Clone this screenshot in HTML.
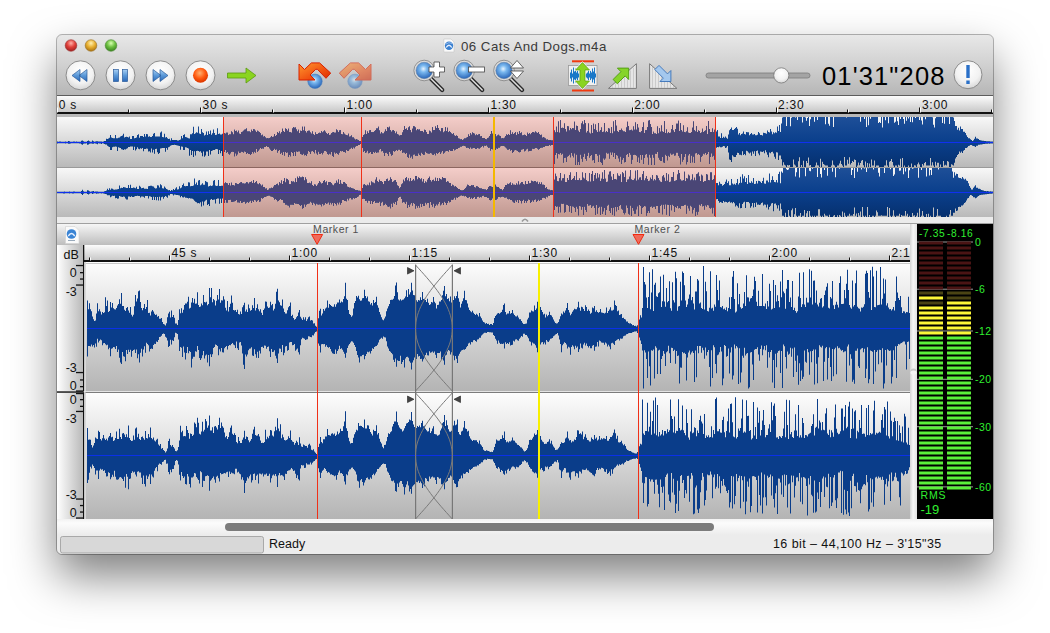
<!DOCTYPE html><html><head><meta charset="utf-8"><style>*{margin:0;padding:0}html,body{width:1050px;height:633px;background:#fff;overflow:hidden}#sh{position:absolute;left:57px;top:35px;width:936px;height:519px;border-radius:5px;box-shadow:0 22px 45px rgba(0,0,0,.5)}svg{position:absolute;left:0;top:0}</style></head><body>
<div id="sh"></div>
<svg width="1050" height="633" viewBox="0 0 1050 633" font-family="Liberation Sans, sans-serif">
<clipPath id="wclip"><rect x="57" y="35" width="936" height="519" rx="5"/></clipPath>
<g clip-path="url(#wclip)">
<rect x="57" y="35" width="936" height="519" fill="#e4e4e4"/>
<defs>
<linearGradient id="gTb" x1="0" y1="0" x2="0" y2="1"><stop offset="0" stop-color="#e8e8e8"/><stop offset="0.5" stop-color="#d0d0d0"/><stop offset="1" stop-color="#b5b5b5"/></linearGradient>
<linearGradient id="gRul" x1="0" y1="0" x2="0" y2="1"><stop offset="0" stop-color="#fcfcfc"/><stop offset="1" stop-color="#c8c8c8"/></linearGradient>
<linearGradient id="gMk" x1="0" y1="0" x2="0" y2="1"><stop offset="0" stop-color="#f6f6f6"/><stop offset="1" stop-color="#bdbdbd"/></linearGradient>
<linearGradient id="gCh" x1="0" y1="0" x2="0" y2="1"><stop offset="0" stop-color="#fdfdfd"/><stop offset="1" stop-color="#b4b4b4"/></linearGradient>
<linearGradient id="gChO" x1="0" y1="0" x2="0" y2="1"><stop offset="0" stop-color="#f8f8f8"/><stop offset="1" stop-color="#b9b9b9"/></linearGradient>
<linearGradient id="gDb" x1="0" y1="0" x2="1" y2="0"><stop offset="0" stop-color="#ffffff"/><stop offset="1" stop-color="#b9b9b9"/></linearGradient>
<linearGradient id="gScr" x1="0" y1="0" x2="0" y2="1"><stop offset="0" stop-color="#f2f2f2"/><stop offset="0.25" stop-color="#fcfcfc"/><stop offset="1" stop-color="#ececec"/></linearGradient>
<radialGradient id="gBtn" cx="0.5" cy="0.35" r="0.7"><stop offset="0" stop-color="#ffffff"/><stop offset="0.6" stop-color="#f2f2f2"/><stop offset="1" stop-color="#d0d0d0"/></radialGradient>
<radialGradient id="gRed" cx="0.5" cy="0.3" r="0.7"><stop offset="0" stop-color="#ffb0a8"/><stop offset="0.5" stop-color="#e0403a"/><stop offset="1" stop-color="#a02020"/></radialGradient>
<radialGradient id="gYel" cx="0.5" cy="0.3" r="0.7"><stop offset="0" stop-color="#fff0b0"/><stop offset="0.5" stop-color="#e8b030"/><stop offset="1" stop-color="#a87010"/></radialGradient>
<radialGradient id="gGrn" cx="0.5" cy="0.3" r="0.7"><stop offset="0" stop-color="#d8ffb0"/><stop offset="0.5" stop-color="#6cc040"/><stop offset="1" stop-color="#3a8020"/></radialGradient>
<radialGradient id="gRec" cx="0.45" cy="0.35" r="0.6"><stop offset="0" stop-color="#ffb070"/><stop offset="0.6" stop-color="#ff5a10"/><stop offset="1" stop-color="#e03a00"/></radialGradient>
<radialGradient id="gLens" cx="0.45" cy="0.4" r="0.6"><stop offset="0" stop-color="#e8f4ff"/><stop offset="0.35" stop-color="#7ab8ef"/><stop offset="1" stop-color="#2a66b8"/></radialGradient>
<linearGradient id="gBlueIc" x1="0" y1="0" x2="0" y2="1"><stop offset="0" stop-color="#a8d0f4"/><stop offset="0.5" stop-color="#5a98d8"/><stop offset="1" stop-color="#2a68b8"/></linearGradient>
<linearGradient id="gPink" x1="0" y1="0" x2="0" y2="1"><stop offset="0" stop-color="#f4cdc9"/><stop offset="1" stop-color="#c09890"/></linearGradient>
<linearGradient id="gWo1" gradientUnits="userSpaceOnUse" x1="0" y1="117" x2="0" y2="167"><stop offset="0" stop-color="#1e4f98"/><stop offset="0.5" stop-color="#0a3f8c"/><stop offset="1" stop-color="#06306e"/></linearGradient>
<linearGradient id="gWo2" gradientUnits="userSpaceOnUse" x1="0" y1="168" x2="0" y2="217"><stop offset="0" stop-color="#1e4f98"/><stop offset="0.5" stop-color="#0a3f8c"/><stop offset="1" stop-color="#06306e"/></linearGradient>
<linearGradient id="gStrip" x1="0" y1="0" x2="1" y2="0"><stop offset="0" stop-color="#d4d4d4"/><stop offset="0.45" stop-color="#f6f6f6"/><stop offset="1" stop-color="#e2e2e2"/></linearGradient>
</defs>
<rect x="57" y="35" width="936" height="61" fill="url(#gTb)"/>
<rect x="57" y="95" width="936" height="1" fill="#5c5c5c"/>
<circle cx="71" cy="45.5" r="5.8" fill="url(#gRed)" stroke="#9a3030" stroke-width="0.6"/>
<circle cx="91" cy="45.5" r="5.8" fill="url(#gYel)" stroke="#9a7020" stroke-width="0.6"/>
<circle cx="111" cy="45.5" r="5.8" fill="url(#gGrn)" stroke="#4a8a30" stroke-width="0.6"/>
<text x="461" y="50.5" font-size="13.3" fill="#3a3a3a" letter-spacing="0.45">06 Cats And Dogs.m4a</text>
<path d="M443.8 39 H451 L454 42 V52 H443.8 Z" fill="#fafafa" stroke="#c8c8c8" stroke-width="0.6"/><circle cx="449" cy="45.8" r="4.2" fill="#3a80d0"/><path d="M446.2 47.5 Q449 43 451.8 47.5" fill="none" stroke="#e8f0ff" stroke-width="1.3"/><path d="M445.5 44.2 Q449 41.5 452.3 43.5" fill="none" stroke="#a8c8f0" stroke-width="0.8"/>
<circle cx="80.5" cy="75.3" r="14.5" fill="url(#gBtn)" stroke="#8c8c8c" stroke-width="1"/>
<circle cx="120.5" cy="75.3" r="14.5" fill="url(#gBtn)" stroke="#8c8c8c" stroke-width="1"/>
<circle cx="160.5" cy="75.3" r="14.5" fill="url(#gBtn)" stroke="#8c8c8c" stroke-width="1"/>
<circle cx="200.5" cy="75.3" r="14.5" fill="url(#gBtn)" stroke="#8c8c8c" stroke-width="1"/>
<path d="M72 75.5 L80 69.5 V81.5 Z M79 75.5 L87 69.5 V81.5 Z" fill="url(#gBlueIc)" stroke="#2a5a9a" stroke-width="0.7"/>
<rect x="113.5" y="69.5" width="5" height="12" fill="url(#gBlueIc)" stroke="#2a5a9a" stroke-width="0.7"/><rect x="122.5" y="69.5" width="5" height="12" fill="url(#gBlueIc)" stroke="#2a5a9a" stroke-width="0.7"/>
<path d="M153 69.5 L161 75.5 L153 81.5 Z M160 69.5 L168 75.5 L160 81.5 Z" fill="url(#gBlueIc)" stroke="#2a5a9a" stroke-width="0.7"/>
<circle cx="200.5" cy="75.3" r="7.5" fill="url(#gRec)"/>
<path d="M227.5 73 H246 V68 L256 75.5 L246 83 V78 H227.5 Z" fill="#8ad420" stroke="#5a9a10" stroke-width="0.8"/>
<linearGradient id="gUndo" x1="0" y1="0" x2="1" y2="1"><stop offset="0" stop-color="#ff9a30"/><stop offset="0.6" stop-color="#f05010"/><stop offset="1" stop-color="#d82800"/></linearGradient>
<circle cx="315" cy="81.3" r="7.2" fill="url(#gLens)" stroke="#4a80c0" stroke-width="0.6"/>
<path d="M299 64 L304.5 69.5 L311.4 62.9 L319.6 62.9 L330.7 73.1 L326 78.3 L317.4 69.3 L315.7 69.3 L310 75 L315 80 L299 80 Z" fill="url(#gUndo)" stroke="#d82000" stroke-width="1"/>
<g opacity="0.55"><circle cx="355" cy="81.3" r="7.2" fill="url(#gLens)" stroke="#4a80c0" stroke-width="0.6"/>
<path d="M371.0 64 L365.5 69.5 L358.6 62.9 L350.4 62.9 L339.3 73.1 L344.0 78.3 L352.6 69.3 L354.3 69.3 L360.0 75 L355.0 80 L371.0 80 Z" fill="url(#gUndo)" stroke="#d82000" stroke-width="1"/></g>
<line x1="430.2" y1="78" x2="442.2" y2="90" stroke="#2a2a2a" stroke-width="4.2" stroke-linecap="round"/>
<line x1="430.2" y1="78" x2="442.2" y2="90" stroke="#ddd" stroke-width="1.5" stroke-linecap="round"/>
<circle cx="424.2" cy="70.5" r="10.3" fill="#dcdcdc" stroke="#808080" stroke-width="0.8"/>
<circle cx="424.2" cy="70.5" r="8.2" fill="url(#gLens)" stroke="#5a7aa0" stroke-width="0.5"/>
<line x1="470.2" y1="78" x2="482.2" y2="90" stroke="#2a2a2a" stroke-width="4.2" stroke-linecap="round"/>
<line x1="470.2" y1="78" x2="482.2" y2="90" stroke="#ddd" stroke-width="1.5" stroke-linecap="round"/>
<circle cx="464.2" cy="70.5" r="10.3" fill="#dcdcdc" stroke="#808080" stroke-width="0.8"/>
<circle cx="464.2" cy="70.5" r="8.2" fill="url(#gLens)" stroke="#5a7aa0" stroke-width="0.5"/>
<line x1="510" y1="78" x2="522" y2="90" stroke="#2a2a2a" stroke-width="4.2" stroke-linecap="round"/>
<line x1="510" y1="78" x2="522" y2="90" stroke="#ddd" stroke-width="1.5" stroke-linecap="round"/>
<circle cx="504" cy="70.5" r="10.3" fill="#dcdcdc" stroke="#808080" stroke-width="0.8"/>
<circle cx="504" cy="70.5" r="8.2" fill="url(#gLens)" stroke="#5a7aa0" stroke-width="0.5"/>
<path d="M434 62 H439.5 V67 H444.5 V72 H439.5 V77 H434 V72 H429 V67 H434 Z" fill="#fff" stroke="#444" stroke-width="0.8"/>
<rect x="468.5" y="67" width="16" height="5" fill="#fff" stroke="#444" stroke-width="0.8"/>
<path d="M510.5 68 L517 60.5 L523.5 68 Z M510.5 71 L517 78.5 L523.5 71 Z" fill="#fff" stroke="#444" stroke-width="0.8"/>
<rect x="572" y="60.3" width="22" height="2" fill="#f03a10"/><rect x="572" y="89.5" width="22" height="2" fill="#f03a10"/>
<rect x="568.5" y="65.5" width="28.5" height="20" fill="#f0f0f0" stroke="#999" stroke-width="0.8"/>
<path d="M570.5 72.5 V78.5 M571.5 69.5 V81.5 M572.5 73.5 V77.5 M573.5 67.5 V83.5 M574.5 71.5 V79.5 M575.5 68.5 V82.5 M576.5 72.5 V78.5 M577.5 70.5 V80.5 M578.5 73.5 V77.5 M579.5 69.5 V81.5 M580.5 72.5 V78.5 M581.5 73.5 V77.5 M582.5 74.5 V76.5 M583.5 74.5 V76.5 M584.5 74.5 V76.5 M585.5 74.5 V76.5 M586.5 73.5 V77.5 M587.5 72.5 V78.5 M588.5 69.5 V81.5 M589.5 73.5 V77.5 M590.5 70.5 V80.5 M591.5 72.5 V78.5 M592.5 68.5 V82.5 M593.5 71.5 V79.5 M594.5 67.5 V83.5 M595.5 73.5 V77.5" stroke="#1a78c8" stroke-width="1" fill="none"/>
<path d="M582.5 62.5 L589.5 70 H585 V81 H589.5 L582.5 88.5 L575.5 81 H580 V70 H575.5 Z" fill="#8ad420" stroke="#fff" stroke-width="1.6"/>
<path d="M582.5 62.5 L589.5 70 H585 V81 H589.5 L582.5 88.5 L575.5 81 H580 V70 H575.5 Z" fill="#8ad420" stroke="#5a9a10" stroke-width="0.7"/>
<linearGradient id="gStr" x1="0" y1="0" x2="1" y2="0" spreadMethod="repeat" gradientUnits="userSpaceOnUse" x2v="3"></linearGradient>
<path d="M608.5 88.4 L636.4 63.7 V88.4 Z" fill="#e6e6e6" stroke="#7a7a7a" stroke-width="1"/>
<line x1="612.5" y1="86.3" x2="612.5" y2="88" stroke="#c4c4c4" stroke-width="0.8"/>
<line x1="615.5" y1="83.6" x2="615.5" y2="88" stroke="#c4c4c4" stroke-width="0.8"/>
<line x1="618.5" y1="81.0" x2="618.5" y2="88" stroke="#c4c4c4" stroke-width="0.8"/>
<line x1="621.5" y1="78.3" x2="621.5" y2="88" stroke="#c4c4c4" stroke-width="0.8"/>
<line x1="624.5" y1="75.7" x2="624.5" y2="88" stroke="#c4c4c4" stroke-width="0.8"/>
<line x1="627.5" y1="73.0" x2="627.5" y2="88" stroke="#c4c4c4" stroke-width="0.8"/>
<line x1="630.5" y1="70.4" x2="630.5" y2="88" stroke="#c4c4c4" stroke-width="0.8"/>
<line x1="633.5" y1="67.7" x2="633.5" y2="88" stroke="#c4c4c4" stroke-width="0.8"/>
<path d="M628.7 68.1 L628.7 79.5 L625.1 75.9 L617.3 83.7 L613.1 79.5 L620.9 71.7 L617.4 68.1 Z" fill="#86d42a" stroke="#4e9a10" stroke-width="0.9"/>
<path d="M649.6 63.7 L676.9 88.4 H649.6 Z" fill="#e6e6e6" stroke="#7a7a7a" stroke-width="1"/>
<line x1="652.5" y1="66.9" x2="652.5" y2="88" stroke="#c4c4c4" stroke-width="0.8"/>
<line x1="655.5" y1="69.6" x2="655.5" y2="88" stroke="#c4c4c4" stroke-width="0.8"/>
<line x1="658.5" y1="72.3" x2="658.5" y2="88" stroke="#c4c4c4" stroke-width="0.8"/>
<line x1="661.5" y1="75.0" x2="661.5" y2="88" stroke="#c4c4c4" stroke-width="0.8"/>
<line x1="664.5" y1="77.7" x2="664.5" y2="88" stroke="#c4c4c4" stroke-width="0.8"/>
<line x1="667.5" y1="80.4" x2="667.5" y2="88" stroke="#c4c4c4" stroke-width="0.8"/>
<line x1="670.5" y1="83.2" x2="670.5" y2="88" stroke="#c4c4c4" stroke-width="0.8"/>
<line x1="673.5" y1="85.9" x2="673.5" y2="88" stroke="#c4c4c4" stroke-width="0.8"/>
<path d="M670.9 81.5 L659.9 81.5 L663.3 78.1 L654.8 69.6 L659 65.4 L667.5 73.9 L670.9 70.5 Z" fill="#a4c8ee" stroke="#3a72b8" stroke-width="0.9"/>
<rect x="706" y="73" width="104" height="5" rx="2.5" fill="#a4a4a4" stroke="#7c7c7c" stroke-width="0.8"/>
<circle cx="781.3" cy="75.4" r="7.6" fill="url(#gBtn)" stroke="#777" stroke-width="0.8"/>
<text x="822" y="85" font-size="25.5" fill="#000" letter-spacing="1.15">01'31"208</text>
<circle cx="968" cy="74.7" r="14" fill="url(#gBtn)" stroke="#8c8c8c" stroke-width="1"/>
<rect x="966.3" y="65" width="3.4" height="13" fill="#2a70c8"/><rect x="966.3" y="80.5" width="3.4" height="3.5" fill="#2a70c8"/>
<rect x="57" y="96" width="936" height="16" fill="url(#gRul)"/>
<rect x="57" y="112" width="936" height="2" fill="#111"/>
<rect x="57" y="114" width="936" height="3" fill="#b8b8b8"/>
<rect x="56" y="107.5" width="1" height="5" fill="#111"/><rect x="57" y="107.5" width="1" height="5" fill="#fff"/>
<text x="58.8" y="108.8" font-size="12" fill="#111" letter-spacing="0.75">0 s</text>
<rect x="128" y="109.5" width="1" height="3" fill="#111"/><rect x="129" y="109.5" width="1" height="3" fill="#fff"/>
<rect x="200" y="107.5" width="1" height="5" fill="#111"/><rect x="201" y="107.5" width="1" height="5" fill="#fff"/>
<text x="202.6" y="108.8" font-size="12" fill="#111" letter-spacing="0.75">30 s</text>
<rect x="272" y="109.5" width="1" height="3" fill="#111"/><rect x="273" y="109.5" width="1" height="3" fill="#fff"/>
<rect x="344" y="107.5" width="1" height="5" fill="#111"/><rect x="345" y="107.5" width="1" height="5" fill="#fff"/>
<text x="346.5" y="108.8" font-size="12" fill="#111" letter-spacing="0.75">1:00</text>
<rect x="416" y="109.5" width="1" height="3" fill="#111"/><rect x="417" y="109.5" width="1" height="3" fill="#fff"/>
<rect x="488" y="107.5" width="1" height="5" fill="#111"/><rect x="489" y="107.5" width="1" height="5" fill="#fff"/>
<text x="490.4" y="108.8" font-size="12" fill="#111" letter-spacing="0.75">1:30</text>
<rect x="560" y="109.5" width="1" height="3" fill="#111"/><rect x="561" y="109.5" width="1" height="3" fill="#fff"/>
<rect x="632" y="107.5" width="1" height="5" fill="#111"/><rect x="633" y="107.5" width="1" height="5" fill="#fff"/>
<text x="634.2" y="108.8" font-size="12" fill="#111" letter-spacing="0.75">2:00</text>
<rect x="704" y="109.5" width="1" height="3" fill="#111"/><rect x="705" y="109.5" width="1" height="3" fill="#fff"/>
<rect x="776" y="107.5" width="1" height="5" fill="#111"/><rect x="777" y="107.5" width="1" height="5" fill="#fff"/>
<text x="778" y="108.8" font-size="12" fill="#111" letter-spacing="0.75">2:30</text>
<rect x="847" y="109.5" width="1" height="3" fill="#111"/><rect x="848" y="109.5" width="1" height="3" fill="#fff"/>
<rect x="919" y="107.5" width="1" height="5" fill="#111"/><rect x="920" y="107.5" width="1" height="5" fill="#fff"/>
<text x="921.9" y="108.8" font-size="12" fill="#111" letter-spacing="0.75">3:00</text>
<rect x="991" y="109.5" width="1" height="3" fill="#111"/><rect x="992" y="109.5" width="1" height="3" fill="#fff"/>
<rect x="57" y="117" width="936" height="50" fill="url(#gChO)"/>
<rect x="57" y="167" width="936" height="1" fill="#9a9a9a"/>
<rect x="57" y="168" width="936" height="49" fill="url(#gChO)"/>
<rect x="57" y="217" width="936" height="6" fill="#ebebeb"/>
<rect x="57" y="223" width="936" height="1" fill="#a0a0a0"/>
<path d="M522 221.5 Q525 217 528 221.5" fill="none" stroke="#999" stroke-width="1.6"/>
<rect x="57" y="224" width="853" height="21" fill="url(#gMk)"/>
<rect x="57" y="245" width="853" height="15" fill="url(#gRul)"/>
<rect x="83" y="260" width="827" height="2" fill="#111"/>
<rect x="57" y="245" width="26" height="17" fill="url(#gDb)"/>
<text x="63.5" y="259" font-size="12.5" fill="#111">dB</text>
<rect x="83" y="245" width="1.3" height="17" fill="#111"/>
<rect x="89" y="257.5" width="1" height="3" fill="#111"/><rect x="90" y="257.5" width="1" height="3" fill="#fff"/>
<rect x="129" y="257.5" width="1" height="3" fill="#111"/><rect x="130" y="257.5" width="1" height="3" fill="#fff"/>
<rect x="169" y="255.5" width="1" height="5" fill="#111"/><rect x="170" y="255.5" width="1" height="5" fill="#fff"/>
<text x="171.5" y="257.3" font-size="12" fill="#111" letter-spacing="0.75">45 s</text>
<rect x="209" y="257.5" width="1" height="3" fill="#111"/><rect x="210" y="257.5" width="1" height="3" fill="#fff"/>
<rect x="249" y="257.5" width="1" height="3" fill="#111"/><rect x="250" y="257.5" width="1" height="3" fill="#fff"/>
<rect x="289" y="255.5" width="1" height="5" fill="#111"/><rect x="290" y="255.5" width="1" height="5" fill="#fff"/>
<text x="291.5" y="257.3" font-size="12" fill="#111" letter-spacing="0.75">1:00</text>
<rect x="329" y="257.5" width="1" height="3" fill="#111"/><rect x="330" y="257.5" width="1" height="3" fill="#fff"/>
<rect x="369" y="257.5" width="1" height="3" fill="#111"/><rect x="370" y="257.5" width="1" height="3" fill="#fff"/>
<rect x="409" y="255.5" width="1" height="5" fill="#111"/><rect x="410" y="255.5" width="1" height="5" fill="#fff"/>
<text x="411.5" y="257.3" font-size="12" fill="#111" letter-spacing="0.75">1:15</text>
<rect x="449" y="257.5" width="1" height="3" fill="#111"/><rect x="450" y="257.5" width="1" height="3" fill="#fff"/>
<rect x="489" y="257.5" width="1" height="3" fill="#111"/><rect x="490" y="257.5" width="1" height="3" fill="#fff"/>
<rect x="529" y="255.5" width="1" height="5" fill="#111"/><rect x="530" y="255.5" width="1" height="5" fill="#fff"/>
<text x="531.5" y="257.3" font-size="12" fill="#111" letter-spacing="0.75">1:30</text>
<rect x="569" y="257.5" width="1" height="3" fill="#111"/><rect x="570" y="257.5" width="1" height="3" fill="#fff"/>
<rect x="609" y="257.5" width="1" height="3" fill="#111"/><rect x="610" y="257.5" width="1" height="3" fill="#fff"/>
<rect x="649" y="255.5" width="1" height="5" fill="#111"/><rect x="650" y="255.5" width="1" height="5" fill="#fff"/>
<text x="651.5" y="257.3" font-size="12" fill="#111" letter-spacing="0.75">1:45</text>
<rect x="689" y="257.5" width="1" height="3" fill="#111"/><rect x="690" y="257.5" width="1" height="3" fill="#fff"/>
<rect x="729" y="257.5" width="1" height="3" fill="#111"/><rect x="730" y="257.5" width="1" height="3" fill="#fff"/>
<rect x="769" y="255.5" width="1" height="5" fill="#111"/><rect x="770" y="255.5" width="1" height="5" fill="#fff"/>
<text x="771.5" y="257.3" font-size="12" fill="#111" letter-spacing="0.75">2:00</text>
<rect x="809" y="257.5" width="1" height="3" fill="#111"/><rect x="810" y="257.5" width="1" height="3" fill="#fff"/>
<rect x="849" y="257.5" width="1" height="3" fill="#111"/><rect x="850" y="257.5" width="1" height="3" fill="#fff"/>
<rect x="889" y="255.5" width="1" height="5" fill="#111"/><rect x="890" y="255.5" width="1" height="5" fill="#fff"/>
<text x="891.5" y="257.3" font-size="12" fill="#111" letter-spacing="0.75">2:1</text>
<path d="M65.5 226.5 H75 L79 230.5 V243.5 H65.5 Z" fill="#fafafa" stroke="#d0d0d0" stroke-width="0.6"/><circle cx="71.5" cy="234" r="4.8" fill="#3a84d4"/><path d="M68.3 236 Q71.5 231 74.7 236" fill="none" stroke="#e8f0ff" stroke-width="1.4"/><rect x="68" y="240" width="7" height="1" fill="#9ab"/>
<rect x="85" y="262" width="825" height="129" fill="url(#gCh)"/>
<rect x="84" y="263" width="826" height="1" fill="#c8c8c8"/>
<rect x="85" y="392" width="825" height="1" fill="#7c7c7c"/>
<rect x="85" y="393" width="825" height="126" fill="url(#gCh)"/>
<rect x="57" y="262" width="26" height="129" fill="url(#gDb)"/>
<rect x="83" y="262" width="1.3" height="129" fill="#111"/>
<rect x="84.3" y="262" width="1.7" height="129" fill="#d8d8d8"/>
<rect x="57" y="392.5" width="26" height="126.5" fill="url(#gDb)"/>
<rect x="83" y="392.5" width="1.3" height="126.5" fill="#111"/>
<rect x="84.3" y="392.5" width="1.7" height="126.5" fill="#d8d8d8"/>
<rect x="57" y="391.3" width="27" height="1.5" fill="#222"/>
<rect x="76" y="264.9" width="7" height="1.3" fill="#111"/><rect x="76" y="284.4" width="7" height="1.3" fill="#111"/><rect x="76" y="371.9" width="7" height="1.3" fill="#111"/><rect x="76" y="390.4" width="7" height="1.3" fill="#111"/><rect x="80" y="272.0" width="3" height="1.3" fill="#111"/><rect x="80" y="278.4" width="3" height="1.3" fill="#111"/><rect x="80" y="379.29999999999995" width="3" height="1.3" fill="#111"/><rect x="80" y="386.0" width="3" height="1.3" fill="#111"/>
<rect x="76" y="392.9" width="7" height="1.3" fill="#111"/><rect x="76" y="410.79999999999995" width="7" height="1.3" fill="#111"/><rect x="76" y="498.4" width="7" height="1.3" fill="#111"/><rect x="76" y="517.4" width="7" height="1.3" fill="#111"/><rect x="80" y="399.0" width="3" height="1.3" fill="#111"/><rect x="80" y="405.7" width="3" height="1.3" fill="#111"/><rect x="80" y="504.9" width="3" height="1.3" fill="#111"/><rect x="80" y="511.4" width="3" height="1.3" fill="#111"/>
<text x="76.8" y="276.6" font-size="12.5" fill="#111" text-anchor="end">0</text>
<text x="76.8" y="296" font-size="12.5" fill="#111" text-anchor="end">-3</text>
<text x="76.8" y="371.5" font-size="12.5" fill="#111" text-anchor="end">-3</text>
<text x="76.8" y="389.7" font-size="12.5" fill="#111" text-anchor="end">0</text>
<text x="76.8" y="404" font-size="12.5" fill="#111" text-anchor="end">0</text>
<text x="76.8" y="422.5" font-size="12.5" fill="#111" text-anchor="end">-3</text>
<text x="76.8" y="498.5" font-size="12.5" fill="#111" text-anchor="end">-3</text>
<text x="76.8" y="517" font-size="12.5" fill="#111" text-anchor="end">0</text>
<clipPath id="co1"><rect x="57" y="117" width="936" height="50"/></clipPath>
<clipPath id="co2"><rect x="57" y="168" width="936" height="49"/></clipPath>
<clipPath id="csel"><rect x="223" y="117" width="493" height="100"/></clipPath>
<rect x="223" y="117" width="493" height="50" fill="url(#gPink)"/>
<rect x="223" y="168" width="493" height="49" fill="url(#gPink)"/>
<path clip-path="url(#co1)" d="M57 142V141.5H58V141.7H59V141.6H60V141.5H61V141.7H62V141.7H63V141.7H64V141.7H65V141.6H66V141.7H67V141.7H68V140.9H69V141.3H70V141.7H71V141.7H72V141.7H73V141.6H74V141.5H75V141.7H76V141.5H77V141.7H78V141.7H79V141.7H80V141.7H81V140.7H82V140.4H83V141.3H84V141.7H85V141.7H86V141.7H87V140.9H88V140.5H89V141.3H90V141.7H91V141.7H92V140.6H93V141.3H94V141.7H95V141.5H96V141.2H97V141.3H98V141.5H99V141.5H100V141.4H101V141.4H102V141.7H103V141.5H104V141.0H105V141.0H106V138.8H107V139.1H108V138.6H109V137.7H110V134.9H111V137.6H112V138.0H113V138.3H114V138.2H115V135.1H116V138.3H117V138.2H118V137.8H119V137.4H120V136.5H121V136.1H122V135.6H123V133.7H124V137.4H125V137.0H126V136.8H127V136.9H128V137.5H129V136.5H130V138.9H131V138.9H132V135.9H133V136.0H134V138.3H135V137.9H136V137.4H137V135.0H138V134.2H139V137.7H140V135.9H141V135.9H142V136.0H143V137.0H144V134.1H145V136.6H146V133.9H147V134.2H148V136.8H149V136.3H150V136.9H151V137.1H152V136.1H153V133.8H154V132.9H155V136.5H156V136.5H157V136.6H158V136.4H159V136.6H160V132.6H161V131.6H162V137.1H163V137.3H164V133.8H165V137.4H166V137.1H167V138.2H168V139.0H169V138.7H170V140.5H171V138.2H172V140.0H173V139.9H174V139.9H175V139.9H176V140.1H177V140.4H178V140.4H179V139.9H180V139.4H181V135.9H182V138.3H183V134.9H184V134.2H185V136.9H186V137.2H187V137.7H188V138.2H189V138.6H190V134.2H191V134.2H192V133.2H193V126.8H194V134.0H195V133.3H196V132.3H197V132.7H198V126.6H199V133.5H200V134.0H201V129.1H202V132.2H203V133.0H204V135.5H205V134.7H206V131.4H207V135.1H208V131.3H209V134.0H210V130.6H211V134.8H212V133.3H213V129.4H214V133.0H215V135.1H216V134.7H217V128.2H218V134.0H219V133.4H220V134.6H221V134.6H222V133.7H223V134.2H224V133.1H225V133.8H226V132.7H227V132.8H228V135.3H229V134.4H230V134.4H231V131.6H232V132.4H233V134.4H234V129.7H235V130.9H236V130.8H237V132.4H238V130.7H239V133.8H240V134.2H241V132.2H242V131.7H243V130.8H244V129.7H245V129.4H246V128.5H247V131.6H248V131.4H249V131.4H250V132.4H251V129.8H252V131.1H253V129.3H254V129.5H255V130.7H256V132.0H257V130.7H258V131.4H259V132.0H260V133.3H261V135.6H262V134.8H263V136.7H264V136.0H265V137.4H266V138.4H267V138.1H268V138.5H269V137.9H270V137.5H271V136.1H272V137.1H273V136.8H274V134.0H275V135.9H276V135.1H277V132.1H278V133.2H279V131.5H280V133.7H281V132.2H282V128.8H283V131.1H284V131.9H285V128.6H286V128.9H287V130.8H288V128.7H289V132.3H290V132.2H291V132.7H292V128.5H293V127.1H294V127.8H295V127.5H296V129.4H297V131.5H298V129.7H299V133.2H300V130.7H301V131.1H302V126.8H303V130.5H304V126.8H305V131.2H306V132.7H307V131.1H308V130.8H309V130.7H310V132.6H311V133.8H312V131.4H313V134.2H314V135.2H315V132.4H316V134.0H317V134.0H318V133.3H319V132.7H320V133.3H321V131.3H322V132.4H323V131.4H324V130.4H325V131.8H326V133.1H327V134.3H328V133.1H329V134.9H330V134.7H331V133.3H332V132.6H333V132.0H334V132.8H335V132.8H336V129.5H337V130.5H338V132.3H339V130.4H340V130.3H341V133.9H342V134.5H343V132.0H344V133.8H345V134.8H346V135.0H347V135.5H348V133.7H349V136.7H350V136.4H351V135.6H352V137.5H353V137.4H354V138.8H355V139.7H356V138.9H357V139.8H358V140.2H359V140.9H360V141.0H361V140.2H362V136.9H363V135.2H364V134.4H365V130.6H366V134.3H367V131.4H368V132.9H369V130.4H370V130.2H371V132.3H372V132.2H373V132.3H374V131.2H375V130.2H376V128.6H377V128.5H378V126.8H379V130.6H380V133.8H381V132.0H382V133.4H383V133.4H384V131.8H385V129.6H386V130.9H387V127.0H388V127.7H389V126.8H390V130.3H391V131.8H392V130.6H393V130.0H394V131.2H395V133.5H396V131.7H397V134.3H398V134.8H399V135.8H400V135.3H401V135.0H402V132.4H403V130.1H404V126.2H405V128.9H406V128.5H407V130.0H408V127.5H409V126.5H410V129.9H411V132.4H412V128.8H413V126.3H414V126.5H415V127.6H416V130.5H417V129.1H418V129.8H419V129.4H420V131.2H421V131.1H422V130.9H423V132.4H424V129.8H425V130.2H426V132.1H427V134.0H428V134.0H429V130.8H430V131.6H431V132.8H432V127.2H433V130.3H434V130.1H435V126.5H436V128.2H437V125.2H438V128.1H439V130.2H440V131.4H441V128.2H442V128.2H443V132.6H444V131.5H445V127.2H446V131.2H447V127.7H448V132.3H449V131.3H450V132.2H451V133.4H452V134.3H453V133.2H454V135.6H455V136.0H456V135.5H457V135.9H458V138.5H459V138.8H460V139.5H461V139.2H462V140.0H463V139.6H464V138.4H465V138.5H466V137.7H467V137.1H468V134.4H469V135.9H470V132.9H471V134.7H472V132.6H473V133.3H474V133.8H475V135.5H476V134.4H477V135.3H478V134.6H479V134.0H480V136.6H481V135.9H482V137.9H483V138.0H484V138.1H485V139.0H486V139.5H487V138.2H488V137.8H489V135.9H490V134.3H491V131.1H492V133.7H493V133.1H494V134.7H495V134.2H496V136.4H497V135.6H498V134.8H499V135.8H500V136.1H501V138.4H502V138.1H503V138.6H504V137.8H505V136.0H506V134.5H507V135.1H508V134.1H509V134.9H510V130.6H511V134.2H512V132.6H513V134.1H514V133.2H515V132.1H516V135.2H517V132.6H518V134.0H519V131.3H520V133.2H521V132.4H522V135.5H523V135.3H524V134.7H525V135.0H526V136.1H527V132.7H528V134.3H529V133.3H530V134.6H531V132.9H532V132.1H533V132.0H534V132.8H535V131.6H536V132.5H537V132.9H538V132.0H539V134.3H540V135.3H541V134.7H542V137.7H543V136.9H544V137.7H545V138.6H546V139.8H547V139.6H548V140.2H549V139.9H550V140.0H551V140.5H552V140.6H553V132.6H554V130.6H555V132.5H556V126.7H557V132.3H558V121.4H559V132.8H560V120.3H561V127.9H562V127.7H563V128.1H564V123.4H565V129.1H566V131.7H567V126.2H568V126.6H569V130.4H570V128.0H571V129.5H572V127.9H573V128.4H574V121.7H575V130.1H576V125.8H577V125.9H578V130.7H579V132.3H580V129.3H581V123.6H582V121.4H583V124.4H584V120.2H585V123.2H586V132.8H587V131.0H588V123.5H589V132.8H590V133.8H591V125.3H592V133.1H593V123.7H594V129.2H595V124.6H596V130.5H597V131.9H598V123.0H599V131.8H600V130.2H601V127.5H602V132.1H603V131.8H604V122.9H605V132.6H606V131.0H607V132.1H608V128.3H609V128.7H610V133.3H611V127.2H612V133.6H613V121.6H614V131.6H615V120.1H616V125.7H617V131.2H618V132.0H619V130.0H620V130.0H621V128.8H622V130.4H623V131.4H624V131.5H625V132.0H626V127.4H627V121.8H628V126.1H629V130.5H630V130.3H631V129.7H632V130.8H633V126.5H634V129.8H635V122.4H636V129.8H637V123.9H638V127.8H639V132.1H640V132.4H641V130.9H642V127.0H643V122.5H644V132.9H645V130.2H646V130.3H647V127.3H648V120.8H649V120.2H650V124.3H651V127.1H652V134.0H653V131.8H654V133.5H655V133.6H656V133.9H657V126.4H658V133.6H659V128.2H660V131.8H661V125.6H662V131.6H663V132.0H664V121.3H665V133.0H666V129.6H667V133.5H668V132.3H669V133.1H670V132.7H671V129.3H672V124.9H673V130.4H674V132.3H675V129.1H676V123.7H677V123.8H678V120.8H679V131.0H680V123.2H681V130.2H682V131.8H683V125.6H684V132.0H685V132.5H686V131.5H687V127.5H688V132.8H689V132.9H690V133.1H691V132.0H692V127.8H693V121.4H694V130.2H695V131.6H696V126.3H697V132.0H698V130.6H699V130.9H700V132.9H701V132.5H702V128.7H703V132.0H704V131.2H705V130.4H706V126.1H707V134.2H708V120.9H709V129.1H710V132.0H711V131.9H712V128.6H713V132.3H714V129.8H715V133.1H716V131.5H717V129.9H718V136.5H719V136.6H720V137.9H721V133.3H722V138.1H723V136.7H724V137.8H725V136.6H726V137.8H727V138.7H728V134.4H729V130.2H730V129.0H731V127.4H732V130.0H733V130.0H734V128.9H735V127.9H736V126.9H737V128.7H738V134.4H739V133.1H740V135.3H741V134.0H742V133.5H743V131.4H744V134.0H745V134.6H746V132.1H747V132.2H748V132.2H749V135.2H750V134.1H751V133.0H752V134.6H753V134.6H754V134.0H755V135.3H756V135.3H757V134.7H758V132.1H759V133.2H760V135.1H761V135.0H762V135.4H763V132.7H764V133.0H765V133.2H766V133.7H767V130.6H768V132.0H769V132.4H770V129.0H771V131.6H772V134.2H773V132.3H774V133.2H775V132.2H776V132.8H777V126.5H778V131.0H779V124.9H780V131.9H781V123.4H782V117.4H783V116.5H784V116.5H785V116.5H786V126.0H787V116.5H788V116.5H789V116.5H790V126.2H791V117.8H792V116.9H793V116.5H794V116.5H795V117.6H796V116.5H797V120.1H798V116.5H799V116.5H800V116.5H801V116.5H802V122.5H803V117.0H804V116.5H805V117.5H806V120.7H807V117.9H808V116.5H809V126.1H810V119.3H811V116.5H812V116.5H813V116.5H814V121.7H815V116.5H816V116.5H817V120.1H818V116.5H819V116.5H820V116.6H821V116.5H822V116.5H823V116.5H824V116.5H825V124.2H826V116.5H827V116.5H828V123.8H829V125.8H830V116.5H831V116.5H832V116.5H833V127.1H834V116.5H835V116.5H836V116.5H837V116.5H838V116.5H839V116.5H840V116.8H841V116.5H842V116.9H843V116.5H844V116.5H845V116.5H846V117.4H847V116.5H848V116.9H849V116.5H850V116.5H851V116.5H852V116.5H853V116.5H854V116.5H855V116.7H856V116.5H857V116.5H858V116.5H859V116.5H860V121.8H861V116.5H862V116.5H863V116.5H864V118.9H865V116.5H866V127.1H867V117.0H868V125.2H869V116.5H870V118.8H871V116.5H872V116.5H873V116.5H874V116.5H875V116.5H876V116.5H877V116.5H878V123.0H879V122.1H880V123.0H881V116.5H882V127.4H883V116.5H884V116.5H885V120.3H886V116.5H887V116.5H888V123.2H889V116.5H890V116.5H891V116.5H892V116.7H893V116.5H894V122.8H895V121.8H896V117.3H897V121.3H898V124.9H899V116.6H900V119.1H901V116.5H902V116.5H903V119.0H904V123.8H905V116.5H906V120.7H907V116.5H908V118.5H909V116.5H910V122.0H911V116.5H912V122.2H913V116.5H914V116.5H915V117.9H916V116.5H917V116.5H918V116.5H919V120.0H920V117.2H921V120.4H922V124.4H923V116.5H924V116.5H925V119.3H926V116.5H927V116.5H928V116.9H929V116.5H930V116.5H931V116.5H932V117.2H933V124.7H934V127.4H935V118.2H936V116.5H937V116.5H938V116.5H939V116.5H940V116.5H941V116.5H942V122.9H943V116.5H944V123.8H945V116.5H946V116.8H947V117.2H948V116.5H949V124.0H950V116.5H951V116.5H952V116.5H953V117.4H954V120.9H955V126.0H956V125.9H957V129.7H958V127.8H959V130.4H960V126.4H961V129.1H962V128.9H963V131.7H964V131.7H965V132.9H966V135.3H967V137.0H968V138.3H969V138.3H970V139.2H971V140.0H972V141.0H973V140.3H974V138.7H975V136.7H976V138.6H977V138.4H978V138.9H979V139.9H980V140.2H981V140.5H982V140.7H983V140.8H984V141.1H985V141.1H986V141.2H987V141.2H988V141.3H989V141.3H990V141.4H991V141.4H992V141.5H993V143V143.5H992V143.5H991V143.6H990V143.7H989V143.5H988V143.7H987V143.7H986V143.8H985V144.0H984V144.1H983V144.2H982V144.6H981V144.5H980V144.8H979V144.7H978V145.7H977V145.7H976V147.0H975V146.3H974V146.0H973V145.8H972V145.0H971V145.0H970V145.8H969V145.9H968V147.3H967V148.0H966V148.1H965V150.0H964V150.8H963V152.9H962V151.6H961V152.8H960V151.4H959V154.0H958V155.1H957V157.1H956V158.5H955V162.7H954V165.5H953V164.8H952V164.2H951V167.0H950V167.0H949V161.7H948V160.9H947V165.5H946V164.7H945V165.5H944V160.9H943V167.0H942V167.0H941V164.6H940V167.0H939V162.8H938V162.7H937V165.5H936V161.7H935V167.0H934V165.5H933V162.2H932V165.5H931V158.1H930V165.5H929V165.5H928V165.5H927V165.5H926V162.0H925V163.1H924V165.5H923V163.9H922V167.0H921V167.0H920V164.4H919V162.6H918V164.2H917V167.0H916V165.5H915V165.2H914V167.0H913V167.0H912V163.5H911V167.0H910V167.0H909V165.5H908V167.0H907V167.0H906V167.0H905V165.5H904V167.0H903V158.1H902V167.0H901V158.8H900V165.5H899V164.8H898V167.0H897V165.5H896V165.5H895V167.0H894V165.5H893V162.0H892V159.0H891V161.0H890V161.7H889V167.0H888V165.5H887V160.2H886V165.5H885V165.5H884V167.0H883V167.0H882V167.0H881V167.0H880V167.0H879V165.5H878V165.5H877V165.5H876V167.0H875V160.6H874V165.5H873V165.5H872V159.4H871V167.0H870V163.5H869V167.0H868V163.1H867V167.0H866V161.4H865V167.0H864V165.3H863V160.1H862V160.8H861V163.0H860V165.3H859V162.6H858V165.5H857V167.0H856V160.0H855V159.5H854V161.9H853V160.9H852V162.9H851V164.5H850V157.2H849V163.8H848V159.7H847V165.4H846V165.5H845V157.1H844V167.0H843V165.5H842V163.9H841V160.7H840V163.6H839V165.5H838V165.5H837V167.0H836V167.0H835V165.5H834V164.8H833V160.6H832V165.5H831V167.0H830V167.0H829V167.0H828V165.5H827V165.5H826V165.5H825V164.7H824V164.1H823V161.8H822V167.0H821V158.7H820V167.0H819V165.5H818V165.3H817V162.4H816V165.5H815V167.0H814V167.0H813V167.0H812V167.0H811V164.9H810V165.5H809V157.6H808V163.1H807V161.1H806V167.0H805V167.0H804V160.8H803V167.0H802V164.9H801V167.0H800V157.2H799V161.3H798V167.0H797V167.0H796V165.5H795V164.6H794V159.5H793V167.0H792V167.0H791V167.0H790V165.1H789V165.5H788V165.1H787V167.0H786V165.5H785V164.7H784V162.3H783V165.5H782V159.2H781V155.5H780V155.4H779V160.1H778V152.6H777V152.2H776V158.7H775V156.8H774V153.4H773V151.8H772V151.9H771V153.3H770V152.5H769V157.3H768V154.7H767V152.2H766V150.3H765V153.3H764V151.3H763V152.1H762V151.7H761V151.5H760V155.3H759V153.6H758V150.6H757V150.9H756V156.0H755V151.3H754V153.7H753V151.4H752V155.8H751V152.4H750V153.5H749V152.4H748V151.2H747V150.8H746V155.3H745V154.0H744V155.0H743V151.2H742V155.2H741V154.8H740V154.8H739V152.9H738V152.8H737V155.1H736V157.0H735V157.1H734V156.5H733V155.2H732V161.9H731V160.0H730V159.6H729V152.4H728V146.1H727V147.5H726V147.9H725V146.3H724V146.1H723V146.7H722V147.3H721V147.2H720V146.6H719V147.2H718V146.9H717V147.7H716V152.9H715V159.6H714V155.4H713V156.6H712V153.3H711V156.7H710V164.0H709V151.8H708V153.9H707V155.0H706V153.1H705V154.2H704V153.6H703V155.5H702V156.7H701V161.4H700V155.1H699V153.8H698V154.4H697V152.9H696V153.3H695V162.7H694V156.4H693V162.3H692V155.5H691V163.1H690V153.8H689V155.2H688V161.7H687V164.2H686V153.7H685V156.9H684V159.5H683V161.4H682V153.8H681V164.2H680V157.4H679V155.9H678V152.6H677V152.5H676V155.3H675V155.6H674V153.5H673V154.3H672V154.5H671V153.2H670V156.7H669V155.6H668V160.2H667V156.0H666V154.5H665V162.8H664V162.2H663V156.7H662V160.7H661V161.0H660V159.4H659V157.4H658V151.7H657V153.7H656V153.5H655V164.7H654V157.5H653V154.6H652V164.9H651V157.6H650V154.4H649V164.4H648V157.3H647V154.0H646V154.5H645V157.9H644V163.8H643V154.7H642V159.5H641V155.1H640V162.8H639V157.3H638V162.0H637V155.4H636V154.9H635V154.5H634V155.0H633V159.5H632V164.0H631V154.5H630V152.9H629V156.9H628V154.0H627V154.9H626V161.7H625V162.3H624V157.8H623V159.6H622V163.8H621V156.4H620V161.4H619V158.3H618V155.6H617V155.0H616V158.8H615V153.1H614V157.0H613V152.2H612V154.9H611V152.3H610V158.4H609V153.2H608V153.5H607V152.4H606V158.3H605V159.5H604V158.2H603V164.7H602V162.9H601V161.9H600V154.5H599V161.7H598V155.5H597V154.1H596V153.7H595V162.8H594V159.8H593V160.3H592V155.1H591V156.0H590V157.4H589V152.5H588V155.8H587V160.6H586V159.0H585V153.4H584V156.8H583V161.6H582V158.6H581V154.4H580V164.8H579V162.1H578V164.8H577V154.4H576V164.8H575V153.3H574V157.2H573V155.4H572V153.1H571V157.2H570V154.5H569V156.1H568V156.6H567V161.8H566V157.4H565V158.0H564V162.5H563V153.4H562V154.6H561V153.0H560V154.3H559V153.9H558V158.3H557V153.1H556V154.9H555V164.1H554V164.7H553V144.7H552V145.1H551V145.4H550V145.1H549V145.7H548V145.9H547V145.8H546V146.1H545V147.1H544V146.8H543V147.4H542V147.6H541V147.7H540V148.7H539V149.4H538V148.4H537V148.1H536V147.7H535V148.5H534V149.1H533V148.4H532V150.6H531V151.0H530V150.9H529V151.2H528V148.5H527V149.3H526V150.4H525V151.3H524V149.0H523V149.3H522V149.4H521V151.8H520V152.3H519V152.0H518V150.7H517V150.3H516V149.8H515V150.2H514V152.1H513V153.0H512V150.1H511V150.5H510V149.1H509V149.4H508V149.6H507V148.3H506V147.2H505V146.2H504V145.7H503V145.7H502V145.9H501V146.3H500V147.5H499V147.5H498V148.7H497V148.2H496V150.1H495V149.4H494V151.0H493V149.3H492V149.1H491V150.5H490V147.4H489V147.7H488V146.5H487V145.2H486V145.7H485V145.6H484V147.3H483V146.1H482V146.8H481V147.5H480V148.6H479V148.2H478V147.7H477V148.8H476V148.8H475V147.8H474V147.8H473V148.3H472V148.5H471V147.2H470V148.9H469V147.8H468V147.5H467V147.8H466V146.2H465V145.9H464V145.6H463V145.7H462V146.6H461V146.6H460V147.6H459V148.0H458V148.9H457V148.9H456V149.4H455V150.3H454V149.0H453V150.9H452V150.7H451V151.1H450V150.0H449V151.5H448V150.7H447V151.1H446V151.2H445V152.6H444V153.4H443V150.9H442V152.2H441V153.8H440V151.9H439V153.0H438V153.8H437V153.1H436V155.3H435V153.4H434V154.9H433V154.6H432V153.3H431V152.7H430V153.6H429V153.6H428V153.2H427V153.1H426V151.5H425V154.5H424V154.8H423V154.1H422V152.4H421V155.6H420V154.7H419V153.2H418V155.7H417V155.6H416V156.1H415V154.2H414V154.6H413V158.5H412V156.3H411V157.5H410V154.3H409V157.7H408V157.1H407V153.1H406V154.0H405V152.4H404V152.2H403V152.7H402V150.0H401V151.0H400V149.5H399V149.5H398V151.1H397V150.0H396V150.8H395V151.5H394V150.9H393V154.7H392V155.6H391V153.4H390V151.8H389V156.0H388V154.0H387V152.6H386V153.0H385V156.1H384V152.5H383V150.7H382V151.2H381V149.1H380V149.5H379V152.2H378V152.2H377V152.7H376V151.4H375V152.8H374V151.8H373V153.7H372V153.8H371V152.1H370V152.7H369V153.3H368V150.6H367V152.3H366V152.9H365V150.8H364V152.1H363V147.8H362V145.0H361V144.1H360V145.1H359V145.0H358V145.8H357V146.0H356V146.6H355V148.2H354V147.3H353V149.1H352V147.6H351V148.4H350V149.3H349V151.0H348V151.1H347V150.0H346V152.5H345V151.9H344V151.9H343V151.1H342V151.3H341V151.1H340V152.6H339V154.4H338V154.1H337V152.8H336V153.6H335V152.3H334V156.7H333V155.9H332V151.8H331V154.3H330V153.4H329V154.4H328V154.0H327V151.4H326V150.9H325V150.8H324V152.4H323V154.3H322V153.1H321V154.1H320V154.0H319V151.4H318V154.4H317V153.2H316V149.8H315V153.2H314V152.0H313V150.9H312V151.2H311V153.7H310V151.7H309V150.9H308V153.5H307V156.1H306V154.8H305V155.3H304V153.6H303V154.9H302V154.3H301V154.0H300V151.2H299V151.3H298V152.1H297V151.3H296V155.8H295V151.9H294V155.7H293V153.0H292V152.1H291V156.3H290V154.9H289V156.7H288V152.2H287V153.0H286V152.1H285V155.5H284V151.7H283V155.1H282V152.6H281V154.1H280V150.1H279V151.0H278V152.4H277V149.2H276V149.8H275V148.6H274V150.1H273V150.7H272V150.7H271V149.5H270V148.2H269V147.0H268V146.7H267V145.9H266V146.9H265V147.1H264V148.6H263V148.3H262V148.8H261V148.1H260V149.2H259V150.5H258V151.9H257V149.1H256V152.6H255V151.5H254V153.3H253V151.7H252V153.9H251V154.9H250V154.1H249V154.0H248V152.8H247V153.8H246V151.7H245V151.2H244V152.5H243V152.0H242V151.4H241V152.5H240V153.1H239V151.2H238V154.3H237V155.4H236V153.2H235V156.2H234V152.1H233V151.4H232V151.7H231V153.3H230V154.4H229V153.4H228V151.9H227V152.8H226V150.1H225V152.0H224V154.3H223V156.1H222V150.9H221V153.2H220V149.9H219V154.0H218V149.3H217V149.0H216V149.2H215V150.1H214V149.9H213V150.6H212V151.0H211V154.5H210V150.1H209V156.0H208V151.6H207V151.5H206V155.6H205V156.7H204V151.5H203V156.2H202V152.7H201V151.3H200V151.7H199V151.1H198V150.8H197V150.9H196V155.5H195V151.2H194V157.1H193V150.9H192V155.0H191V149.9H190V155.8H189V148.4H188V147.9H187V147.5H186V147.2H185V150.1H184V149.9H183V146.7H182V146.6H181V149.8H180V146.1H179V145.8H178V145.6H177V145.2H176V144.9H175V144.8H174V144.9H173V145.0H172V145.3H171V145.7H170V146.7H169V147.2H168V149.7H167V148.1H166V151.8H165V148.1H164V147.9H163V148.0H162V148.2H161V148.5H160V153.0H159V154.1H158V152.2H157V148.8H156V149.0H155V153.8H154V149.7H153V152.4H152V148.5H151V152.6H150V151.3H149V151.6H148V148.7H147V148.4H146V148.9H145V148.9H144V151.2H143V148.0H142V148.7H141V148.2H140V149.2H139V148.8H138V147.3H137V149.3H136V150.4H135V146.8H134V149.9H133V146.5H132V146.6H131V146.6H130V147.0H129V146.9H128V148.3H127V148.7H126V149.5H125V149.2H124V149.9H123V149.6H122V149.2H121V148.0H120V147.7H119V147.2H118V151.0H117V146.7H116V146.6H115V146.7H114V146.7H113V147.3H112V150.0H111V150.0H110V147.0H109V146.4H108V145.8H107V144.6H106V144.6H105V143.9H104V143.4H103V143.3H102V143.9H101V143.6H100V143.5H99V143.3H98V144.3H97V143.8H96V143.5H95V143.3H94V143.8H93V143.8H92V143.5H91V143.5H90V143.7H89V144.4H88V144.7H87V143.3H86V143.4H85V143.5H84V143.8H83V144.8H82V144.3H81V143.5H80V143.5H79V143.3H78V143.3H77V143.3H76V143.3H75V143.3H74V143.3H73V143.3H72V143.3H71V143.4H70V143.7H69V143.8H68V143.3H67V143.3H66V143.4H65V143.3H64V143.3H63V143.3H62V143.3H61V143.3H60V143.3H59V143.3H58V143.5H57Z" fill="url(#gWo1)"/>
<path clip-path="url(#co2)" d="M57 192V191.7H58V191.7H59V191.7H60V191.7H61V191.7H62V191.7H63V191.7H64V191.5H65V191.7H66V191.7H67V191.7H68V191.7H69V191.5H70V191.7H71V191.7H72V191.7H73V191.6H74V191.5H75V191.7H76V191.7H77V191.7H78V191.7H79V191.7H80V191.7H81V191.0H82V189.8H83V191.3H84V191.7H85V191.7H86V191.7H87V190.2H88V190.5H89V191.3H90V191.7H91V191.6H92V191.3H93V191.1H94V191.7H95V191.5H96V191.4H97V191.4H98V191.7H99V191.7H100V191.7H101V191.7H102V191.7H103V191.7H104V191.3H105V191.1H106V190.6H107V188.7H108V189.9H109V188.2H110V189.8H111V188.5H112V188.7H113V189.6H114V189.8H115V189.5H116V189.4H117V189.2H118V188.9H119V185.4H120V188.2H121V187.8H122V188.1H123V187.0H124V187.2H125V187.4H126V187.9H127V188.1H128V184.9H129V187.9H130V184.7H131V187.9H132V188.1H133V187.6H134V187.8H135V188.3H136V186.8H137V189.1H138V188.9H139V185.7H140V186.8H141V188.2H142V187.9H143V187.8H144V188.7H145V188.7H146V188.8H147V189.0H148V186.3H149V186.0H150V185.7H151V185.7H152V186.2H153V186.4H154V187.8H155V188.4H156V188.3H157V185.3H158V185.6H159V187.5H160V184.2H161V185.3H162V188.2H163V188.4H164V186.5H165V187.7H166V189.0H167V189.4H168V190.3H169V189.9H170V190.9H171V189.9H172V190.6H173V188.9H174V190.1H175V188.4H176V187.2H177V189.4H178V189.2H179V186.2H180V188.3H181V187.4H182V185.0H183V183.5H184V186.0H185V186.2H186V186.1H187V186.1H188V182.3H189V182.6H190V186.2H191V186.1H192V186.0H193V185.5H194V178.5H195V184.3H196V182.6H197V185.1H198V180.4H199V180.0H200V185.2H201V184.5H202V183.3H203V184.8H204V184.8H205V180.9H206V181.7H207V182.2H208V186.4H209V186.0H210V185.5H211V185.9H212V185.4H213V180.7H214V180.0H215V185.6H216V185.9H217V185.8H218V180.0H219V186.0H220V186.1H221V185.8H222V185.7H223V182.5H224V183.6H225V182.6H226V183.0H227V183.5H228V184.9H229V182.9H230V185.7H231V182.8H232V185.3H233V185.2H234V185.8H235V183.0H236V183.4H237V183.9H238V184.2H239V183.2H240V182.6H241V182.1H242V183.6H243V183.5H244V183.7H245V183.6H246V182.2H247V182.4H248V183.8H249V182.5H250V182.1H251V181.6H252V182.9H253V180.3H254V183.3H255V182.2H256V180.9H257V183.7H258V184.6H259V183.0H260V184.4H261V185.8H262V184.8H263V187.2H264V187.2H265V188.8H266V188.6H267V189.9H268V189.7H269V188.5H270V188.6H271V187.8H272V188.0H273V186.8H274V185.3H275V185.2H276V184.3H277V183.7H278V185.5H279V181.9H280V183.5H281V180.4H282V184.0H283V180.9H284V178.2H285V182.5H286V178.7H287V179.1H288V180.6H289V184.2H290V184.3H291V181.1H292V181.8H293V181.5H294V182.6H295V178.6H296V182.1H297V176.7H298V177.9H299V176.4H300V177.4H301V177.4H302V176.7H303V177.0H304V180.4H305V177.5H306V179.5H307V183.0H308V183.2H309V182.8H310V183.5H311V181.4H312V184.9H313V186.0H314V184.5H315V184.8H316V186.0H317V184.8H318V183.3H319V181.1H320V182.5H321V183.8H322V182.9H323V180.9H324V180.3H325V182.5H326V181.5H327V184.9H328V182.3H329V181.9H330V182.1H331V183.3H332V184.8H333V185.4H334V183.7H335V182.9H336V180.7H337V182.7H338V179.4H339V183.9H340V180.3H341V183.8H342V184.1H343V182.2H344V182.3H345V183.4H346V183.9H347V186.7H348V187.1H349V187.8H350V187.5H351V188.0H352V188.5H353V188.8H354V189.0H355V189.9H356V190.2H357V190.3H358V190.7H359V190.8H360V191.3H361V190.2H362V188.1H363V184.7H364V184.2H365V185.2H366V185.8H367V184.8H368V185.5H369V182.7H370V185.5H371V181.5H372V182.4H373V182.7H374V183.6H375V179.8H376V177.5H377V180.9H378V182.2H379V179.7H380V180.9H381V181.0H382V181.9H383V184.3H384V181.1H385V181.2H386V179.3H387V178.8H388V180.9H389V180.4H390V177.4H391V179.1H392V182.1H393V181.6H394V180.5H395V180.1H396V182.3H397V185.4H398V186.2H399V188.4H400V187.3H401V184.6H402V183.5H403V179.8H404V181.5H405V178.3H406V177.3H407V180.4H408V178.4H409V181.6H410V178.0H411V181.1H412V180.4H413V179.1H414V180.8H415V175.9H416V176.0H417V179.5H418V177.4H419V178.1H420V179.5H421V178.6H422V181.7H423V179.1H424V182.9H425V181.6H426V182.4H427V179.7H428V178.0H429V176.7H430V180.3H431V181.8H432V180.1H433V179.8H434V181.3H435V177.7H436V181.0H437V178.1H438V181.1H439V178.2H440V179.2H441V179.7H442V177.1H443V177.9H444V177.9H445V178.4H446V181.9H447V181.3H448V181.8H449V183.1H450V183.0H451V186.1H452V184.8H453V185.5H454V186.7H455V186.1H456V187.0H457V187.9H458V189.1H459V189.1H460V189.9H461V190.6H462V190.6H463V189.9H464V189.3H465V188.3H466V186.7H467V184.8H468V185.2H469V185.9H470V186.3H471V185.1H472V185.4H473V185.2H474V187.3H475V187.7H476V186.3H477V186.6H478V186.9H479V188.2H480V188.5H481V188.4H482V189.0H483V189.3H484V189.4H485V189.4H486V190.2H487V188.9H488V187.3H489V186.1H490V186.3H491V186.7H492V187.0H493V186.9H494V185.5H495V184.7H496V186.7H497V186.9H498V187.0H499V188.6H500V189.2H501V189.2H502V190.6H503V188.9H504V187.3H505V185.1H506V185.1H507V183.8H508V184.3H509V183.5H510V182.5H511V185.0H512V183.4H513V184.8H514V184.8H515V185.0H516V183.6H517V184.7H518V181.5H519V184.7H520V183.5H521V182.1H522V182.2H523V184.0H524V184.7H525V181.2H526V184.0H527V184.0H528V181.1H529V183.5H530V183.0H531V180.8H532V181.3H533V181.8H534V181.1H535V181.3H536V182.5H537V181.8H538V184.2H539V182.6H540V184.1H541V182.4H542V184.7H543V184.7H544V185.0H545V188.0H546V187.2H547V188.9H548V189.7H549V189.8H550V190.4H551V190.0H552V190.5H553V175.0H554V179.7H555V173.8H556V176.6H557V181.2H558V181.6H559V178.3H560V173.1H561V180.8H562V178.5H563V178.2H564V174.6H565V182.0H566V182.0H567V178.2H568V180.1H569V174.9H570V172.4H571V180.0H572V178.9H573V177.9H574V176.3H575V180.2H576V172.2H577V180.0H578V180.2H579V178.6H580V180.4H581V180.3H582V172.5H583V177.8H584V178.7H585V172.9H586V180.1H587V181.6H588V181.6H589V173.2H590V181.7H591V174.1H592V171.1H593V181.2H594V175.0H595V173.3H596V178.8H597V173.2H598V177.7H599V174.4H600V181.3H601V178.7H602V172.5H603V179.1H604V170.0H605V178.8H606V181.9H607V181.7H608V174.7H609V171.8H610V171.5H611V176.7H612V180.0H613V174.0H614V179.3H615V179.1H616V179.7H617V173.5H618V175.7H619V176.2H620V174.6H621V182.2H622V172.3H623V173.4H624V176.9H625V170.7H626V181.9H627V179.7H628V179.4H629V176.8H630V170.2H631V179.6H632V180.2H633V180.2H634V178.7H635V170.8H636V180.8H637V170.2H638V179.7H639V177.7H640V177.5H641V180.3H642V174.3H643V171.3H644V180.6H645V178.4H646V176.3H647V178.9H648V181.2H649V180.8H650V177.8H651V179.3H652V175.2H653V180.7H654V179.3H655V180.6H656V175.3H657V175.7H658V178.3H659V180.4H660V181.8H661V182.2H662V176.4H663V175.0H664V177.8H665V181.3H666V173.1H667V180.8H668V174.5H669V182.2H670V181.7H671V177.0H672V177.1H673V172.3H674V181.3H675V180.8H676V180.3H677V174.6H678V170.0H679V173.0H680V179.4H681V180.8H682V180.7H683V180.3H684V171.8H685V181.2H686V178.1H687V178.8H688V174.8H689V175.8H690V180.4H691V179.6H692V174.6H693V180.4H694V177.7H695V180.6H696V174.2H697V173.8H698V172.5H699V176.6H700V180.9H701V174.8H702V175.8H703V182.1H704V181.2H705V181.1H706V174.0H707V174.7H708V179.9H709V180.4H710V172.6H711V172.4H712V179.9H713V179.3H714V175.6H715V177.8H716V183.0H717V183.0H718V185.3H719V181.8H720V183.8H721V183.9H722V185.7H723V185.1H724V183.9H725V181.8H726V179.6H727V183.1H728V181.2H729V185.3H730V185.3H731V178.9H732V183.4H733V184.5H734V183.8H735V184.8H736V182.9H737V179.1H738V184.6H739V183.0H740V176.7H741V182.8H742V174.2H743V178.6H744V176.3H745V181.9H746V177.9H747V184.0H748V175.0H749V182.5H750V183.1H751V181.2H752V182.8H753V178.1H754V183.9H755V183.7H756V181.1H757V183.4H758V180.8H759V180.9H760V181.8H761V183.1H762V180.9H763V177.8H764V183.6H765V183.7H766V180.4H767V180.5H768V182.3H769V173.6H770V182.4H771V180.1H772V176.3H773V179.9H774V182.1H775V182.2H776V179.9H777V182.5H778V174.1H779V171.8H780V183.2H781V171.6H782V172.8H783V167.5H784V167.5H785V167.7H786V169.3H787V170.1H788V169.6H789V167.5H790V167.5H791V167.5H792V167.5H793V167.5H794V167.5H795V176.4H796V172.2H797V167.5H798V167.5H799V177.4H800V167.5H801V168.0H802V167.6H803V167.5H804V167.5H805V176.2H806V167.5H807V167.5H808V167.5H809V170.7H810V171.2H811V167.5H812V168.7H813V167.5H814V167.5H815V167.5H816V167.5H817V177.1H818V167.5H819V167.5H820V174.0H821V177.5H822V167.5H823V167.5H824V170.1H825V167.5H826V167.5H827V175.8H828V167.5H829V167.5H830V167.5H831V167.5H832V171.7H833V167.5H834V167.6H835V177.3H836V167.5H837V167.5H838V167.5H839V168.7H840V167.5H841V167.5H842V167.5H843V167.5H844V167.5H845V167.5H846V167.5H847V167.5H848V167.5H849V167.5H850V167.5H851V174.9H852V170.1H853V167.5H854V177.9H855V167.5H856V167.5H857V171.8H858V167.5H859V167.5H860V167.6H861V169.4H862V167.5H863V167.6H864V168.5H865V167.5H866V172.0H867V167.5H868V168.3H869V167.5H870V167.5H871V167.5H872V167.5H873V169.4H874V167.5H875V167.5H876V167.5H877V167.5H878V172.7H879V176.4H880V167.5H881V167.5H882V167.5H883V167.5H884V173.1H885V167.5H886V168.0H887V167.5H888V167.5H889V167.5H890V169.3H891V167.5H892V167.5H893V176.0H894V174.5H895V167.5H896V167.5H897V167.5H898V167.5H899V170.7H900V170.6H901V167.5H902V167.5H903V174.2H904V167.6H905V171.6H906V167.6H907V167.6H908V177.9H909V170.2H910V167.5H911V167.5H912V168.7H913V168.3H914V167.5H915V167.5H916V168.0H917V167.5H918V177.7H919V167.5H920V167.5H921V170.0H922V167.5H923V167.5H924V167.5H925V167.5H926V176.6H927V167.5H928V167.8H929V175.5H930V170.0H931V174.9H932V167.5H933V167.7H934V167.5H935V167.5H936V167.5H937V167.5H938V169.6H939V167.5H940V167.5H941V167.5H942V167.5H943V167.5H944V167.5H945V167.5H946V167.5H947V167.6H948V167.5H949V167.5H950V167.5H951V167.5H952V171.6H953V177.8H954V172.2H955V175.4H956V173.7H957V174.1H958V177.4H959V178.1H960V178.0H961V178.8H962V177.0H963V178.5H964V179.5H965V178.8H966V180.4H967V181.1H968V183.3H969V186.0H970V187.8H971V189.5H972V189.5H973V187.8H974V186.6H975V185.2H976V187.8H977V187.7H978V188.8H979V188.7H980V189.2H981V189.9H982V190.2H983V190.6H984V191.1H985V191.1H986V191.2H987V191.1H988V191.3H989V191.4H990V191.3H991V191.4H992V191.5H993V193V193.5H992V193.7H991V193.8H990V193.8H989V193.9H988V194.0H987V194.2H986V194.3H985V194.5H984V194.5H983V194.8H982V194.7H981V195.0H980V195.3H979V196.1H978V196.8H977V197.7H976V198.2H975V197.2H974V197.2H973V196.1H972V195.2H971V195.1H970V196.3H969V197.9H968V198.4H967V200.6H966V202.2H965V203.1H964V204.6H963V205.4H962V205.5H961V206.9H960V206.7H959V207.0H958V210.5H957V210.9H956V208.6H955V212.7H954V212.7H953V215.8H952V215.8H951V210.0H950V214.4H949V217.3H948V217.3H947V215.8H946V217.3H945V217.3H944V217.3H943V217.3H942V217.3H941V215.8H940V215.7H939V215.8H938V208.9H937V215.8H936V217.3H935V217.3H934V207.5H933V217.3H932V217.3H931V215.8H930V217.3H929V213.8H928V217.3H927V214.1H926V217.3H925V217.3H924V215.8H923V211.0H922V215.8H921V217.3H920V208.6H919V217.3H918V212.7H917V215.8H916V217.3H915V215.3H914V215.7H913V213.1H912V217.3H911V217.3H910V215.8H909V217.3H908V213.8H907V215.7H906V210.9H905V215.8H904V215.8H903V215.8H902V214.9H901V217.3H900V213.8H899V215.8H898V215.8H897V215.8H896V217.3H895V215.8H894V210.3H893V215.7H892V217.3H891V215.8H890V208.0H889V217.3H888V207.0H887V215.8H886V215.8H885V215.8H884V215.8H883V215.8H882V215.3H881V215.8H880V215.8H879V215.8H878V212.2H877V210.6H876V215.8H875V217.3H874V215.8H873V215.7H872V217.3H871V217.3H870V214.9H869V217.3H868V207.0H867V217.3H866V215.8H865V217.3H864V215.8H863V207.0H862V217.3H861V211.4H860V215.6H859V212.9H858V217.3H857V213.4H856V215.8H855V207.6H854V213.9H853V215.8H852V215.4H851V215.8H850V213.7H849V215.8H848V215.8H847V217.3H846V215.8H845V212.7H844V217.3H843V211.4H842V217.3H841V215.8H840V215.1H839V217.3H838V215.2H837V217.3H836V217.3H835V214.9H834V215.7H833V217.3H832V217.3H831V217.3H830V214.7H829V217.3H828V215.8H827V215.8H826V215.5H825V213.7H824V217.3H823V215.8H822V217.3H821V215.8H820V209.2H819V209.2H818V215.8H817V215.8H816V217.3H815V215.8H814V217.3H813V215.8H812V217.3H811V215.8H810V211.0H809V217.3H808V210.9H807V213.2H806V217.3H805V209.9H804V215.8H803V215.8H802V217.3H801V213.1H800V215.8H799V215.8H798V217.3H797V215.8H796V208.0H795V214.3H794V217.3H793V208.4H792V210.2H791V217.3H790V215.8H789V210.0H788V217.3H787V217.3H786V212.7H785V217.3H784V215.8H783V215.8H782V209.2H781V203.4H780V210.7H779V205.2H778V208.4H777V205.3H776V203.4H775V203.7H774V211.3H773V203.1H772V203.5H771V205.7H770V207.0H769V209.6H768V204.5H767V207.6H766V204.7H765V204.6H764V205.5H763V202.4H762V202.9H761V204.4H760V205.1H759V204.5H758V204.8H757V202.6H756V207.0H755V203.0H754V207.4H753V202.9H752V206.3H751V207.7H750V203.3H749V202.0H748V202.1H747V201.9H746V208.1H745V201.7H744V202.4H743V203.9H742V208.1H741V208.2H740V203.3H739V207.7H738V206.2H737V205.3H736V206.5H735V203.3H734V201.9H733V203.3H732V202.2H731V202.8H730V201.6H729V202.0H728V202.8H727V201.9H726V201.7H725V202.2H724V201.1H723V202.9H722V202.4H721V202.1H720V202.7H719V201.0H718V199.0H717V199.2H716V208.5H715V215.9H714V207.4H713V213.2H712V207.6H711V208.6H710V208.1H709V205.3H708V205.0H707V206.5H706V205.2H705V209.6H704V205.8H703V206.2H702V204.1H701V205.6H700V204.5H699V211.6H698V214.4H697V211.5H696V215.9H695V207.8H694V209.5H693V213.2H692V206.5H691V205.5H690V210.6H689V208.3H688V205.5H687V213.4H686V204.4H685V205.0H684V205.8H683V206.0H682V206.1H681V209.0H680V207.8H679V208.3H678V205.8H677V207.9H676V207.1H675V211.7H674V205.9H673V204.4H672V210.3H671V204.8H670V215.8H669V204.7H668V204.4H667V214.4H666V204.2H665V208.8H664V204.6H663V214.3H662V204.4H661V205.7H660V212.8H659V212.4H658V206.1H657V205.7H656V208.8H655V206.5H654V206.5H653V208.1H652V206.2H651V206.8H650V213.1H649V210.8H648V212.7H647V215.4H646V206.3H645V206.1H644V206.9H643V208.1H642V213.8H641V205.9H640V205.0H639V215.8H638V206.3H637V209.2H636V213.6H635V213.4H634V210.5H633V207.7H632V215.7H631V205.6H630V214.4H629V213.6H628V207.8H627V205.2H626V212.4H625V214.2H624V212.7H623V209.6H622V208.4H621V204.8H620V205.8H619V209.7H618V207.1H617V211.2H616V206.8H615V215.4H614V207.6H613V214.4H612V207.9H611V213.1H610V210.7H609V204.5H608V205.4H607V210.1H606V214.7H605V207.9H604V211.2H603V214.1H602V206.6H601V215.1H600V206.5H599V208.1H598V213.5H597V205.0H596V214.9H595V207.8H594V205.4H593V206.3H592V207.8H591V204.9H590V205.2H589V205.4H588V204.1H587V212.0H586V209.8H585V206.6H584V215.1H583V207.1H582V209.4H581V206.2H580V206.0H579V215.3H578V208.6H577V206.4H576V211.7H575V207.7H574V206.6H573V206.2H572V212.9H571V206.0H570V211.6H569V206.1H568V205.0H567V204.5H566V212.0H565V212.6H564V203.5H563V204.0H562V203.5H561V212.2H560V206.6H559V212.4H558V206.2H557V207.1H556V205.7H555V210.1H554V208.8H553V194.7H552V194.9H551V195.0H550V195.8H549V195.5H548V197.2H547V196.4H546V198.4H545V197.9H544V197.5H543V197.7H542V199.7H541V199.7H540V200.8H539V199.6H538V201.0H537V201.8H536V199.3H535V200.0H534V201.5H533V200.3H532V201.8H531V202.7H530V200.0H529V199.3H528V200.8H527V202.6H526V200.8H525V202.7H524V199.6H523V200.7H522V203.2H521V200.9H520V199.9H519V203.0H518V200.1H517V201.8H516V200.3H515V202.7H514V202.3H513V201.2H512V199.8H511V199.7H510V198.9H509V199.3H508V198.7H507V197.3H506V197.4H505V197.5H504V196.8H503V196.4H502V196.7H501V197.2H500V197.1H499V197.1H498V198.4H497V199.5H496V199.8H495V199.7H494V198.1H493V198.3H492V199.7H491V200.3H490V200.1H489V197.7H488V197.7H487V196.7H486V196.9H485V196.7H484V195.5H483V195.8H482V197.2H481V196.7H480V197.4H479V196.4H478V197.0H477V198.4H476V198.7H475V196.9H474V198.0H473V198.9H472V197.6H471V199.1H470V197.0H469V197.4H468V198.1H467V197.1H466V196.1H465V196.3H464V195.5H463V195.8H462V195.2H461V195.5H460V196.2H459V196.8H458V197.9H457V197.3H456V199.5H455V197.6H454V199.3H453V199.9H452V199.6H451V202.1H450V202.3H449V200.8H448V202.8H447V205.1H446V202.7H445V201.4H444V204.8H443V203.0H442V204.3H441V205.3H440V202.0H439V203.6H438V205.3H437V204.3H436V205.7H435V207.5H434V203.5H433V206.4H432V205.0H431V202.1H430V207.4H429V202.9H428V202.8H427V204.3H426V202.4H425V206.0H424V206.0H423V203.9H422V207.1H421V203.5H420V207.5H419V206.0H418V207.6H417V205.5H416V208.4H415V204.1H414V202.7H413V205.6H412V202.9H411V204.2H410V206.8H409V205.1H408V207.7H407V201.6H406V204.1H405V202.2H404V201.9H403V202.6H402V198.9H401V196.6H400V196.9H399V198.0H398V200.5H397V204.7H396V202.1H395V203.7H394V202.6H393V206.7H392V203.5H391V208.2H390V206.3H389V207.1H388V206.3H387V204.7H386V203.5H385V204.7H384V205.3H383V201.6H382V202.5H381V205.7H380V201.6H379V202.9H378V202.4H377V202.6H376V202.7H375V200.9H374V201.8H373V204.1H372V201.1H371V204.1H370V201.0H369V200.6H368V202.5H367V200.4H366V200.9H365V199.1H364V198.6H363V199.0H362V195.0H361V194.4H360V194.7H359V196.2H358V197.0H357V197.8H356V198.0H355V198.5H354V197.8H353V199.2H352V199.2H351V197.9H350V198.2H349V200.2H348V198.6H347V201.3H346V200.7H345V200.9H344V199.9H343V199.9H342V203.1H341V204.4H340V202.3H339V204.2H338V202.4H337V205.2H336V203.9H335V203.1H334V205.9H333V203.1H332V204.2H331V202.5H330V204.5H329V202.3H328V203.2H327V203.7H326V203.0H325V204.5H324V205.3H323V203.8H322V206.2H321V204.5H320V204.2H319V204.6H318V204.2H317V203.5H316V205.2H315V203.4H314V202.4H313V204.7H312V202.6H311V201.6H310V203.3H309V203.4H308V204.0H307V204.5H306V206.4H305V204.2H304V207.9H303V208.5H302V204.7H301V205.7H300V204.8H299V203.7H298V204.1H297V203.5H296V203.4H295V203.1H294V205.0H293V204.4H292V204.6H291V204.4H290V207.3H289V205.5H288V205.2H287V204.4H286V204.4H285V202.7H284V202.5H283V199.8H282V200.0H281V199.1H280V200.1H279V201.0H278V201.3H277V199.8H276V198.8H275V199.6H274V197.6H273V196.9H272V196.5H271V196.3H270V195.4H269V195.4H268V195.9H267V196.3H266V197.1H265V197.0H264V198.1H263V198.4H262V198.1H261V201.3H260V201.7H259V199.7H258V200.6H257V201.9H256V200.2H255V199.8H254V202.1H253V200.4H252V203.1H251V200.5H250V201.5H249V202.7H248V201.8H247V202.4H246V203.5H245V201.6H244V202.0H243V202.5H242V202.8H241V200.7H240V202.6H239V202.3H238V202.3H237V199.7H236V201.1H235V201.3H234V201.4H233V201.7H232V201.9H231V199.4H230V199.8H229V200.1H228V202.4H227V202.4H226V199.9H225V202.8H224V200.7H223V198.5H222V203.1H221V198.8H220V203.7H219V198.6H218V198.6H217V198.9H216V203.6H215V199.4H214V199.8H213V199.9H212V199.0H211V199.7H210V206.1H209V204.1H208V205.0H207V199.7H206V200.5H205V201.6H204V205.6H203V201.5H202V206.5H201V202.3H200V203.6H199V202.9H198V203.3H197V202.3H196V201.7H195V200.7H194V199.4H193V198.8H192V198.6H191V198.5H190V198.0H189V198.5H188V198.1H187V197.8H186V197.7H185V196.7H184V197.5H183V197.3H182V196.0H181V197.3H180V195.5H179V195.2H178V195.1H177V194.9H176V194.8H175V194.6H174V195.4H173V194.2H172V194.1H171V194.0H170V195.4H169V195.2H168V197.8H167V196.7H166V196.1H165V196.9H164V198.7H163V196.8H162V197.2H161V200.5H160V196.8H159V200.6H158V197.0H157V200.2H156V196.9H155V200.1H154V196.7H153V199.9H152V197.0H151V196.4H150V196.2H149V198.5H148V195.9H147V196.0H146V196.0H145V197.8H144V196.7H143V196.4H142V196.6H141V197.5H140V195.9H139V195.9H138V195.7H137V195.9H136V195.9H135V196.4H134V196.9H133V197.0H132V196.2H131V197.0H130V196.6H129V196.5H128V199.6H127V199.4H126V198.6H125V196.8H124V196.6H123V196.9H122V196.7H121V196.5H120V196.1H119V198.4H118V198.7H117V198.1H116V198.3H115V195.7H114V195.9H113V195.7H112V196.6H111V197.2H110V195.3H109V195.3H108V195.2H107V194.3H106V193.9H105V193.7H104V193.5H103V193.3H102V193.5H101V193.3H100V193.3H99V193.5H98V193.6H97V193.7H96V193.3H95V193.3H94V193.6H93V194.0H92V193.3H91V193.3H90V193.8H89V194.5H88V193.9H87V193.3H86V193.3H85V193.3H84V193.7H83V195.1H82V194.0H81V193.3H80V193.3H79V193.3H78V193.3H77V193.3H76V193.3H75V193.3H74V193.5H73V193.5H72V193.3H71V193.3H70V193.5H69V193.3H68V193.3H67V193.3H66V193.3H65V193.5H64V193.5H63V193.3H62V193.3H61V193.3H60V193.3H59V193.3H58V193.3H57Z" fill="url(#gWo2)"/>
<rect x="57" y="142" width="936" height="1" fill="#1030f0"/>
<rect x="57" y="192" width="936" height="1" fill="#1030f0"/>
<g clip-path="url(#csel)">
<path clip-path="url(#co1)" d="M57 142V141.5H58V141.7H59V141.6H60V141.5H61V141.7H62V141.7H63V141.7H64V141.7H65V141.6H66V141.7H67V141.7H68V140.9H69V141.3H70V141.7H71V141.7H72V141.7H73V141.6H74V141.5H75V141.7H76V141.5H77V141.7H78V141.7H79V141.7H80V141.7H81V140.7H82V140.4H83V141.3H84V141.7H85V141.7H86V141.7H87V140.9H88V140.5H89V141.3H90V141.7H91V141.7H92V140.6H93V141.3H94V141.7H95V141.5H96V141.2H97V141.3H98V141.5H99V141.5H100V141.4H101V141.4H102V141.7H103V141.5H104V141.0H105V141.0H106V138.8H107V139.1H108V138.6H109V137.7H110V134.9H111V137.6H112V138.0H113V138.3H114V138.2H115V135.1H116V138.3H117V138.2H118V137.8H119V137.4H120V136.5H121V136.1H122V135.6H123V133.7H124V137.4H125V137.0H126V136.8H127V136.9H128V137.5H129V136.5H130V138.9H131V138.9H132V135.9H133V136.0H134V138.3H135V137.9H136V137.4H137V135.0H138V134.2H139V137.7H140V135.9H141V135.9H142V136.0H143V137.0H144V134.1H145V136.6H146V133.9H147V134.2H148V136.8H149V136.3H150V136.9H151V137.1H152V136.1H153V133.8H154V132.9H155V136.5H156V136.5H157V136.6H158V136.4H159V136.6H160V132.6H161V131.6H162V137.1H163V137.3H164V133.8H165V137.4H166V137.1H167V138.2H168V139.0H169V138.7H170V140.5H171V138.2H172V140.0H173V139.9H174V139.9H175V139.9H176V140.1H177V140.4H178V140.4H179V139.9H180V139.4H181V135.9H182V138.3H183V134.9H184V134.2H185V136.9H186V137.2H187V137.7H188V138.2H189V138.6H190V134.2H191V134.2H192V133.2H193V126.8H194V134.0H195V133.3H196V132.3H197V132.7H198V126.6H199V133.5H200V134.0H201V129.1H202V132.2H203V133.0H204V135.5H205V134.7H206V131.4H207V135.1H208V131.3H209V134.0H210V130.6H211V134.8H212V133.3H213V129.4H214V133.0H215V135.1H216V134.7H217V128.2H218V134.0H219V133.4H220V134.6H221V134.6H222V133.7H223V134.2H224V133.1H225V133.8H226V132.7H227V132.8H228V135.3H229V134.4H230V134.4H231V131.6H232V132.4H233V134.4H234V129.7H235V130.9H236V130.8H237V132.4H238V130.7H239V133.8H240V134.2H241V132.2H242V131.7H243V130.8H244V129.7H245V129.4H246V128.5H247V131.6H248V131.4H249V131.4H250V132.4H251V129.8H252V131.1H253V129.3H254V129.5H255V130.7H256V132.0H257V130.7H258V131.4H259V132.0H260V133.3H261V135.6H262V134.8H263V136.7H264V136.0H265V137.4H266V138.4H267V138.1H268V138.5H269V137.9H270V137.5H271V136.1H272V137.1H273V136.8H274V134.0H275V135.9H276V135.1H277V132.1H278V133.2H279V131.5H280V133.7H281V132.2H282V128.8H283V131.1H284V131.9H285V128.6H286V128.9H287V130.8H288V128.7H289V132.3H290V132.2H291V132.7H292V128.5H293V127.1H294V127.8H295V127.5H296V129.4H297V131.5H298V129.7H299V133.2H300V130.7H301V131.1H302V126.8H303V130.5H304V126.8H305V131.2H306V132.7H307V131.1H308V130.8H309V130.7H310V132.6H311V133.8H312V131.4H313V134.2H314V135.2H315V132.4H316V134.0H317V134.0H318V133.3H319V132.7H320V133.3H321V131.3H322V132.4H323V131.4H324V130.4H325V131.8H326V133.1H327V134.3H328V133.1H329V134.9H330V134.7H331V133.3H332V132.6H333V132.0H334V132.8H335V132.8H336V129.5H337V130.5H338V132.3H339V130.4H340V130.3H341V133.9H342V134.5H343V132.0H344V133.8H345V134.8H346V135.0H347V135.5H348V133.7H349V136.7H350V136.4H351V135.6H352V137.5H353V137.4H354V138.8H355V139.7H356V138.9H357V139.8H358V140.2H359V140.9H360V141.0H361V140.2H362V136.9H363V135.2H364V134.4H365V130.6H366V134.3H367V131.4H368V132.9H369V130.4H370V130.2H371V132.3H372V132.2H373V132.3H374V131.2H375V130.2H376V128.6H377V128.5H378V126.8H379V130.6H380V133.8H381V132.0H382V133.4H383V133.4H384V131.8H385V129.6H386V130.9H387V127.0H388V127.7H389V126.8H390V130.3H391V131.8H392V130.6H393V130.0H394V131.2H395V133.5H396V131.7H397V134.3H398V134.8H399V135.8H400V135.3H401V135.0H402V132.4H403V130.1H404V126.2H405V128.9H406V128.5H407V130.0H408V127.5H409V126.5H410V129.9H411V132.4H412V128.8H413V126.3H414V126.5H415V127.6H416V130.5H417V129.1H418V129.8H419V129.4H420V131.2H421V131.1H422V130.9H423V132.4H424V129.8H425V130.2H426V132.1H427V134.0H428V134.0H429V130.8H430V131.6H431V132.8H432V127.2H433V130.3H434V130.1H435V126.5H436V128.2H437V125.2H438V128.1H439V130.2H440V131.4H441V128.2H442V128.2H443V132.6H444V131.5H445V127.2H446V131.2H447V127.7H448V132.3H449V131.3H450V132.2H451V133.4H452V134.3H453V133.2H454V135.6H455V136.0H456V135.5H457V135.9H458V138.5H459V138.8H460V139.5H461V139.2H462V140.0H463V139.6H464V138.4H465V138.5H466V137.7H467V137.1H468V134.4H469V135.9H470V132.9H471V134.7H472V132.6H473V133.3H474V133.8H475V135.5H476V134.4H477V135.3H478V134.6H479V134.0H480V136.6H481V135.9H482V137.9H483V138.0H484V138.1H485V139.0H486V139.5H487V138.2H488V137.8H489V135.9H490V134.3H491V131.1H492V133.7H493V133.1H494V134.7H495V134.2H496V136.4H497V135.6H498V134.8H499V135.8H500V136.1H501V138.4H502V138.1H503V138.6H504V137.8H505V136.0H506V134.5H507V135.1H508V134.1H509V134.9H510V130.6H511V134.2H512V132.6H513V134.1H514V133.2H515V132.1H516V135.2H517V132.6H518V134.0H519V131.3H520V133.2H521V132.4H522V135.5H523V135.3H524V134.7H525V135.0H526V136.1H527V132.7H528V134.3H529V133.3H530V134.6H531V132.9H532V132.1H533V132.0H534V132.8H535V131.6H536V132.5H537V132.9H538V132.0H539V134.3H540V135.3H541V134.7H542V137.7H543V136.9H544V137.7H545V138.6H546V139.8H547V139.6H548V140.2H549V139.9H550V140.0H551V140.5H552V140.6H553V132.6H554V130.6H555V132.5H556V126.7H557V132.3H558V121.4H559V132.8H560V120.3H561V127.9H562V127.7H563V128.1H564V123.4H565V129.1H566V131.7H567V126.2H568V126.6H569V130.4H570V128.0H571V129.5H572V127.9H573V128.4H574V121.7H575V130.1H576V125.8H577V125.9H578V130.7H579V132.3H580V129.3H581V123.6H582V121.4H583V124.4H584V120.2H585V123.2H586V132.8H587V131.0H588V123.5H589V132.8H590V133.8H591V125.3H592V133.1H593V123.7H594V129.2H595V124.6H596V130.5H597V131.9H598V123.0H599V131.8H600V130.2H601V127.5H602V132.1H603V131.8H604V122.9H605V132.6H606V131.0H607V132.1H608V128.3H609V128.7H610V133.3H611V127.2H612V133.6H613V121.6H614V131.6H615V120.1H616V125.7H617V131.2H618V132.0H619V130.0H620V130.0H621V128.8H622V130.4H623V131.4H624V131.5H625V132.0H626V127.4H627V121.8H628V126.1H629V130.5H630V130.3H631V129.7H632V130.8H633V126.5H634V129.8H635V122.4H636V129.8H637V123.9H638V127.8H639V132.1H640V132.4H641V130.9H642V127.0H643V122.5H644V132.9H645V130.2H646V130.3H647V127.3H648V120.8H649V120.2H650V124.3H651V127.1H652V134.0H653V131.8H654V133.5H655V133.6H656V133.9H657V126.4H658V133.6H659V128.2H660V131.8H661V125.6H662V131.6H663V132.0H664V121.3H665V133.0H666V129.6H667V133.5H668V132.3H669V133.1H670V132.7H671V129.3H672V124.9H673V130.4H674V132.3H675V129.1H676V123.7H677V123.8H678V120.8H679V131.0H680V123.2H681V130.2H682V131.8H683V125.6H684V132.0H685V132.5H686V131.5H687V127.5H688V132.8H689V132.9H690V133.1H691V132.0H692V127.8H693V121.4H694V130.2H695V131.6H696V126.3H697V132.0H698V130.6H699V130.9H700V132.9H701V132.5H702V128.7H703V132.0H704V131.2H705V130.4H706V126.1H707V134.2H708V120.9H709V129.1H710V132.0H711V131.9H712V128.6H713V132.3H714V129.8H715V133.1H716V131.5H717V129.9H718V136.5H719V136.6H720V137.9H721V133.3H722V138.1H723V136.7H724V137.8H725V136.6H726V137.8H727V138.7H728V134.4H729V130.2H730V129.0H731V127.4H732V130.0H733V130.0H734V128.9H735V127.9H736V126.9H737V128.7H738V134.4H739V133.1H740V135.3H741V134.0H742V133.5H743V131.4H744V134.0H745V134.6H746V132.1H747V132.2H748V132.2H749V135.2H750V134.1H751V133.0H752V134.6H753V134.6H754V134.0H755V135.3H756V135.3H757V134.7H758V132.1H759V133.2H760V135.1H761V135.0H762V135.4H763V132.7H764V133.0H765V133.2H766V133.7H767V130.6H768V132.0H769V132.4H770V129.0H771V131.6H772V134.2H773V132.3H774V133.2H775V132.2H776V132.8H777V126.5H778V131.0H779V124.9H780V131.9H781V123.4H782V117.4H783V116.5H784V116.5H785V116.5H786V126.0H787V116.5H788V116.5H789V116.5H790V126.2H791V117.8H792V116.9H793V116.5H794V116.5H795V117.6H796V116.5H797V120.1H798V116.5H799V116.5H800V116.5H801V116.5H802V122.5H803V117.0H804V116.5H805V117.5H806V120.7H807V117.9H808V116.5H809V126.1H810V119.3H811V116.5H812V116.5H813V116.5H814V121.7H815V116.5H816V116.5H817V120.1H818V116.5H819V116.5H820V116.6H821V116.5H822V116.5H823V116.5H824V116.5H825V124.2H826V116.5H827V116.5H828V123.8H829V125.8H830V116.5H831V116.5H832V116.5H833V127.1H834V116.5H835V116.5H836V116.5H837V116.5H838V116.5H839V116.5H840V116.8H841V116.5H842V116.9H843V116.5H844V116.5H845V116.5H846V117.4H847V116.5H848V116.9H849V116.5H850V116.5H851V116.5H852V116.5H853V116.5H854V116.5H855V116.7H856V116.5H857V116.5H858V116.5H859V116.5H860V121.8H861V116.5H862V116.5H863V116.5H864V118.9H865V116.5H866V127.1H867V117.0H868V125.2H869V116.5H870V118.8H871V116.5H872V116.5H873V116.5H874V116.5H875V116.5H876V116.5H877V116.5H878V123.0H879V122.1H880V123.0H881V116.5H882V127.4H883V116.5H884V116.5H885V120.3H886V116.5H887V116.5H888V123.2H889V116.5H890V116.5H891V116.5H892V116.7H893V116.5H894V122.8H895V121.8H896V117.3H897V121.3H898V124.9H899V116.6H900V119.1H901V116.5H902V116.5H903V119.0H904V123.8H905V116.5H906V120.7H907V116.5H908V118.5H909V116.5H910V122.0H911V116.5H912V122.2H913V116.5H914V116.5H915V117.9H916V116.5H917V116.5H918V116.5H919V120.0H920V117.2H921V120.4H922V124.4H923V116.5H924V116.5H925V119.3H926V116.5H927V116.5H928V116.9H929V116.5H930V116.5H931V116.5H932V117.2H933V124.7H934V127.4H935V118.2H936V116.5H937V116.5H938V116.5H939V116.5H940V116.5H941V116.5H942V122.9H943V116.5H944V123.8H945V116.5H946V116.8H947V117.2H948V116.5H949V124.0H950V116.5H951V116.5H952V116.5H953V117.4H954V120.9H955V126.0H956V125.9H957V129.7H958V127.8H959V130.4H960V126.4H961V129.1H962V128.9H963V131.7H964V131.7H965V132.9H966V135.3H967V137.0H968V138.3H969V138.3H970V139.2H971V140.0H972V141.0H973V140.3H974V138.7H975V136.7H976V138.6H977V138.4H978V138.9H979V139.9H980V140.2H981V140.5H982V140.7H983V140.8H984V141.1H985V141.1H986V141.2H987V141.2H988V141.3H989V141.3H990V141.4H991V141.4H992V141.5H993V143V143.5H992V143.5H991V143.6H990V143.7H989V143.5H988V143.7H987V143.7H986V143.8H985V144.0H984V144.1H983V144.2H982V144.6H981V144.5H980V144.8H979V144.7H978V145.7H977V145.7H976V147.0H975V146.3H974V146.0H973V145.8H972V145.0H971V145.0H970V145.8H969V145.9H968V147.3H967V148.0H966V148.1H965V150.0H964V150.8H963V152.9H962V151.6H961V152.8H960V151.4H959V154.0H958V155.1H957V157.1H956V158.5H955V162.7H954V165.5H953V164.8H952V164.2H951V167.0H950V167.0H949V161.7H948V160.9H947V165.5H946V164.7H945V165.5H944V160.9H943V167.0H942V167.0H941V164.6H940V167.0H939V162.8H938V162.7H937V165.5H936V161.7H935V167.0H934V165.5H933V162.2H932V165.5H931V158.1H930V165.5H929V165.5H928V165.5H927V165.5H926V162.0H925V163.1H924V165.5H923V163.9H922V167.0H921V167.0H920V164.4H919V162.6H918V164.2H917V167.0H916V165.5H915V165.2H914V167.0H913V167.0H912V163.5H911V167.0H910V167.0H909V165.5H908V167.0H907V167.0H906V167.0H905V165.5H904V167.0H903V158.1H902V167.0H901V158.8H900V165.5H899V164.8H898V167.0H897V165.5H896V165.5H895V167.0H894V165.5H893V162.0H892V159.0H891V161.0H890V161.7H889V167.0H888V165.5H887V160.2H886V165.5H885V165.5H884V167.0H883V167.0H882V167.0H881V167.0H880V167.0H879V165.5H878V165.5H877V165.5H876V167.0H875V160.6H874V165.5H873V165.5H872V159.4H871V167.0H870V163.5H869V167.0H868V163.1H867V167.0H866V161.4H865V167.0H864V165.3H863V160.1H862V160.8H861V163.0H860V165.3H859V162.6H858V165.5H857V167.0H856V160.0H855V159.5H854V161.9H853V160.9H852V162.9H851V164.5H850V157.2H849V163.8H848V159.7H847V165.4H846V165.5H845V157.1H844V167.0H843V165.5H842V163.9H841V160.7H840V163.6H839V165.5H838V165.5H837V167.0H836V167.0H835V165.5H834V164.8H833V160.6H832V165.5H831V167.0H830V167.0H829V167.0H828V165.5H827V165.5H826V165.5H825V164.7H824V164.1H823V161.8H822V167.0H821V158.7H820V167.0H819V165.5H818V165.3H817V162.4H816V165.5H815V167.0H814V167.0H813V167.0H812V167.0H811V164.9H810V165.5H809V157.6H808V163.1H807V161.1H806V167.0H805V167.0H804V160.8H803V167.0H802V164.9H801V167.0H800V157.2H799V161.3H798V167.0H797V167.0H796V165.5H795V164.6H794V159.5H793V167.0H792V167.0H791V167.0H790V165.1H789V165.5H788V165.1H787V167.0H786V165.5H785V164.7H784V162.3H783V165.5H782V159.2H781V155.5H780V155.4H779V160.1H778V152.6H777V152.2H776V158.7H775V156.8H774V153.4H773V151.8H772V151.9H771V153.3H770V152.5H769V157.3H768V154.7H767V152.2H766V150.3H765V153.3H764V151.3H763V152.1H762V151.7H761V151.5H760V155.3H759V153.6H758V150.6H757V150.9H756V156.0H755V151.3H754V153.7H753V151.4H752V155.8H751V152.4H750V153.5H749V152.4H748V151.2H747V150.8H746V155.3H745V154.0H744V155.0H743V151.2H742V155.2H741V154.8H740V154.8H739V152.9H738V152.8H737V155.1H736V157.0H735V157.1H734V156.5H733V155.2H732V161.9H731V160.0H730V159.6H729V152.4H728V146.1H727V147.5H726V147.9H725V146.3H724V146.1H723V146.7H722V147.3H721V147.2H720V146.6H719V147.2H718V146.9H717V147.7H716V152.9H715V159.6H714V155.4H713V156.6H712V153.3H711V156.7H710V164.0H709V151.8H708V153.9H707V155.0H706V153.1H705V154.2H704V153.6H703V155.5H702V156.7H701V161.4H700V155.1H699V153.8H698V154.4H697V152.9H696V153.3H695V162.7H694V156.4H693V162.3H692V155.5H691V163.1H690V153.8H689V155.2H688V161.7H687V164.2H686V153.7H685V156.9H684V159.5H683V161.4H682V153.8H681V164.2H680V157.4H679V155.9H678V152.6H677V152.5H676V155.3H675V155.6H674V153.5H673V154.3H672V154.5H671V153.2H670V156.7H669V155.6H668V160.2H667V156.0H666V154.5H665V162.8H664V162.2H663V156.7H662V160.7H661V161.0H660V159.4H659V157.4H658V151.7H657V153.7H656V153.5H655V164.7H654V157.5H653V154.6H652V164.9H651V157.6H650V154.4H649V164.4H648V157.3H647V154.0H646V154.5H645V157.9H644V163.8H643V154.7H642V159.5H641V155.1H640V162.8H639V157.3H638V162.0H637V155.4H636V154.9H635V154.5H634V155.0H633V159.5H632V164.0H631V154.5H630V152.9H629V156.9H628V154.0H627V154.9H626V161.7H625V162.3H624V157.8H623V159.6H622V163.8H621V156.4H620V161.4H619V158.3H618V155.6H617V155.0H616V158.8H615V153.1H614V157.0H613V152.2H612V154.9H611V152.3H610V158.4H609V153.2H608V153.5H607V152.4H606V158.3H605V159.5H604V158.2H603V164.7H602V162.9H601V161.9H600V154.5H599V161.7H598V155.5H597V154.1H596V153.7H595V162.8H594V159.8H593V160.3H592V155.1H591V156.0H590V157.4H589V152.5H588V155.8H587V160.6H586V159.0H585V153.4H584V156.8H583V161.6H582V158.6H581V154.4H580V164.8H579V162.1H578V164.8H577V154.4H576V164.8H575V153.3H574V157.2H573V155.4H572V153.1H571V157.2H570V154.5H569V156.1H568V156.6H567V161.8H566V157.4H565V158.0H564V162.5H563V153.4H562V154.6H561V153.0H560V154.3H559V153.9H558V158.3H557V153.1H556V154.9H555V164.1H554V164.7H553V144.7H552V145.1H551V145.4H550V145.1H549V145.7H548V145.9H547V145.8H546V146.1H545V147.1H544V146.8H543V147.4H542V147.6H541V147.7H540V148.7H539V149.4H538V148.4H537V148.1H536V147.7H535V148.5H534V149.1H533V148.4H532V150.6H531V151.0H530V150.9H529V151.2H528V148.5H527V149.3H526V150.4H525V151.3H524V149.0H523V149.3H522V149.4H521V151.8H520V152.3H519V152.0H518V150.7H517V150.3H516V149.8H515V150.2H514V152.1H513V153.0H512V150.1H511V150.5H510V149.1H509V149.4H508V149.6H507V148.3H506V147.2H505V146.2H504V145.7H503V145.7H502V145.9H501V146.3H500V147.5H499V147.5H498V148.7H497V148.2H496V150.1H495V149.4H494V151.0H493V149.3H492V149.1H491V150.5H490V147.4H489V147.7H488V146.5H487V145.2H486V145.7H485V145.6H484V147.3H483V146.1H482V146.8H481V147.5H480V148.6H479V148.2H478V147.7H477V148.8H476V148.8H475V147.8H474V147.8H473V148.3H472V148.5H471V147.2H470V148.9H469V147.8H468V147.5H467V147.8H466V146.2H465V145.9H464V145.6H463V145.7H462V146.6H461V146.6H460V147.6H459V148.0H458V148.9H457V148.9H456V149.4H455V150.3H454V149.0H453V150.9H452V150.7H451V151.1H450V150.0H449V151.5H448V150.7H447V151.1H446V151.2H445V152.6H444V153.4H443V150.9H442V152.2H441V153.8H440V151.9H439V153.0H438V153.8H437V153.1H436V155.3H435V153.4H434V154.9H433V154.6H432V153.3H431V152.7H430V153.6H429V153.6H428V153.2H427V153.1H426V151.5H425V154.5H424V154.8H423V154.1H422V152.4H421V155.6H420V154.7H419V153.2H418V155.7H417V155.6H416V156.1H415V154.2H414V154.6H413V158.5H412V156.3H411V157.5H410V154.3H409V157.7H408V157.1H407V153.1H406V154.0H405V152.4H404V152.2H403V152.7H402V150.0H401V151.0H400V149.5H399V149.5H398V151.1H397V150.0H396V150.8H395V151.5H394V150.9H393V154.7H392V155.6H391V153.4H390V151.8H389V156.0H388V154.0H387V152.6H386V153.0H385V156.1H384V152.5H383V150.7H382V151.2H381V149.1H380V149.5H379V152.2H378V152.2H377V152.7H376V151.4H375V152.8H374V151.8H373V153.7H372V153.8H371V152.1H370V152.7H369V153.3H368V150.6H367V152.3H366V152.9H365V150.8H364V152.1H363V147.8H362V145.0H361V144.1H360V145.1H359V145.0H358V145.8H357V146.0H356V146.6H355V148.2H354V147.3H353V149.1H352V147.6H351V148.4H350V149.3H349V151.0H348V151.1H347V150.0H346V152.5H345V151.9H344V151.9H343V151.1H342V151.3H341V151.1H340V152.6H339V154.4H338V154.1H337V152.8H336V153.6H335V152.3H334V156.7H333V155.9H332V151.8H331V154.3H330V153.4H329V154.4H328V154.0H327V151.4H326V150.9H325V150.8H324V152.4H323V154.3H322V153.1H321V154.1H320V154.0H319V151.4H318V154.4H317V153.2H316V149.8H315V153.2H314V152.0H313V150.9H312V151.2H311V153.7H310V151.7H309V150.9H308V153.5H307V156.1H306V154.8H305V155.3H304V153.6H303V154.9H302V154.3H301V154.0H300V151.2H299V151.3H298V152.1H297V151.3H296V155.8H295V151.9H294V155.7H293V153.0H292V152.1H291V156.3H290V154.9H289V156.7H288V152.2H287V153.0H286V152.1H285V155.5H284V151.7H283V155.1H282V152.6H281V154.1H280V150.1H279V151.0H278V152.4H277V149.2H276V149.8H275V148.6H274V150.1H273V150.7H272V150.7H271V149.5H270V148.2H269V147.0H268V146.7H267V145.9H266V146.9H265V147.1H264V148.6H263V148.3H262V148.8H261V148.1H260V149.2H259V150.5H258V151.9H257V149.1H256V152.6H255V151.5H254V153.3H253V151.7H252V153.9H251V154.9H250V154.1H249V154.0H248V152.8H247V153.8H246V151.7H245V151.2H244V152.5H243V152.0H242V151.4H241V152.5H240V153.1H239V151.2H238V154.3H237V155.4H236V153.2H235V156.2H234V152.1H233V151.4H232V151.7H231V153.3H230V154.4H229V153.4H228V151.9H227V152.8H226V150.1H225V152.0H224V154.3H223V156.1H222V150.9H221V153.2H220V149.9H219V154.0H218V149.3H217V149.0H216V149.2H215V150.1H214V149.9H213V150.6H212V151.0H211V154.5H210V150.1H209V156.0H208V151.6H207V151.5H206V155.6H205V156.7H204V151.5H203V156.2H202V152.7H201V151.3H200V151.7H199V151.1H198V150.8H197V150.9H196V155.5H195V151.2H194V157.1H193V150.9H192V155.0H191V149.9H190V155.8H189V148.4H188V147.9H187V147.5H186V147.2H185V150.1H184V149.9H183V146.7H182V146.6H181V149.8H180V146.1H179V145.8H178V145.6H177V145.2H176V144.9H175V144.8H174V144.9H173V145.0H172V145.3H171V145.7H170V146.7H169V147.2H168V149.7H167V148.1H166V151.8H165V148.1H164V147.9H163V148.0H162V148.2H161V148.5H160V153.0H159V154.1H158V152.2H157V148.8H156V149.0H155V153.8H154V149.7H153V152.4H152V148.5H151V152.6H150V151.3H149V151.6H148V148.7H147V148.4H146V148.9H145V148.9H144V151.2H143V148.0H142V148.7H141V148.2H140V149.2H139V148.8H138V147.3H137V149.3H136V150.4H135V146.8H134V149.9H133V146.5H132V146.6H131V146.6H130V147.0H129V146.9H128V148.3H127V148.7H126V149.5H125V149.2H124V149.9H123V149.6H122V149.2H121V148.0H120V147.7H119V147.2H118V151.0H117V146.7H116V146.6H115V146.7H114V146.7H113V147.3H112V150.0H111V150.0H110V147.0H109V146.4H108V145.8H107V144.6H106V144.6H105V143.9H104V143.4H103V143.3H102V143.9H101V143.6H100V143.5H99V143.3H98V144.3H97V143.8H96V143.5H95V143.3H94V143.8H93V143.8H92V143.5H91V143.5H90V143.7H89V144.4H88V144.7H87V143.3H86V143.4H85V143.5H84V143.8H83V144.8H82V144.3H81V143.5H80V143.5H79V143.3H78V143.3H77V143.3H76V143.3H75V143.3H74V143.3H73V143.3H72V143.3H71V143.4H70V143.7H69V143.8H68V143.3H67V143.3H66V143.4H65V143.3H64V143.3H63V143.3H62V143.3H61V143.3H60V143.3H59V143.3H58V143.5H57Z" fill="#4a4676"/>
<path clip-path="url(#co2)" d="M57 192V191.7H58V191.7H59V191.7H60V191.7H61V191.7H62V191.7H63V191.7H64V191.5H65V191.7H66V191.7H67V191.7H68V191.7H69V191.5H70V191.7H71V191.7H72V191.7H73V191.6H74V191.5H75V191.7H76V191.7H77V191.7H78V191.7H79V191.7H80V191.7H81V191.0H82V189.8H83V191.3H84V191.7H85V191.7H86V191.7H87V190.2H88V190.5H89V191.3H90V191.7H91V191.6H92V191.3H93V191.1H94V191.7H95V191.5H96V191.4H97V191.4H98V191.7H99V191.7H100V191.7H101V191.7H102V191.7H103V191.7H104V191.3H105V191.1H106V190.6H107V188.7H108V189.9H109V188.2H110V189.8H111V188.5H112V188.7H113V189.6H114V189.8H115V189.5H116V189.4H117V189.2H118V188.9H119V185.4H120V188.2H121V187.8H122V188.1H123V187.0H124V187.2H125V187.4H126V187.9H127V188.1H128V184.9H129V187.9H130V184.7H131V187.9H132V188.1H133V187.6H134V187.8H135V188.3H136V186.8H137V189.1H138V188.9H139V185.7H140V186.8H141V188.2H142V187.9H143V187.8H144V188.7H145V188.7H146V188.8H147V189.0H148V186.3H149V186.0H150V185.7H151V185.7H152V186.2H153V186.4H154V187.8H155V188.4H156V188.3H157V185.3H158V185.6H159V187.5H160V184.2H161V185.3H162V188.2H163V188.4H164V186.5H165V187.7H166V189.0H167V189.4H168V190.3H169V189.9H170V190.9H171V189.9H172V190.6H173V188.9H174V190.1H175V188.4H176V187.2H177V189.4H178V189.2H179V186.2H180V188.3H181V187.4H182V185.0H183V183.5H184V186.0H185V186.2H186V186.1H187V186.1H188V182.3H189V182.6H190V186.2H191V186.1H192V186.0H193V185.5H194V178.5H195V184.3H196V182.6H197V185.1H198V180.4H199V180.0H200V185.2H201V184.5H202V183.3H203V184.8H204V184.8H205V180.9H206V181.7H207V182.2H208V186.4H209V186.0H210V185.5H211V185.9H212V185.4H213V180.7H214V180.0H215V185.6H216V185.9H217V185.8H218V180.0H219V186.0H220V186.1H221V185.8H222V185.7H223V182.5H224V183.6H225V182.6H226V183.0H227V183.5H228V184.9H229V182.9H230V185.7H231V182.8H232V185.3H233V185.2H234V185.8H235V183.0H236V183.4H237V183.9H238V184.2H239V183.2H240V182.6H241V182.1H242V183.6H243V183.5H244V183.7H245V183.6H246V182.2H247V182.4H248V183.8H249V182.5H250V182.1H251V181.6H252V182.9H253V180.3H254V183.3H255V182.2H256V180.9H257V183.7H258V184.6H259V183.0H260V184.4H261V185.8H262V184.8H263V187.2H264V187.2H265V188.8H266V188.6H267V189.9H268V189.7H269V188.5H270V188.6H271V187.8H272V188.0H273V186.8H274V185.3H275V185.2H276V184.3H277V183.7H278V185.5H279V181.9H280V183.5H281V180.4H282V184.0H283V180.9H284V178.2H285V182.5H286V178.7H287V179.1H288V180.6H289V184.2H290V184.3H291V181.1H292V181.8H293V181.5H294V182.6H295V178.6H296V182.1H297V176.7H298V177.9H299V176.4H300V177.4H301V177.4H302V176.7H303V177.0H304V180.4H305V177.5H306V179.5H307V183.0H308V183.2H309V182.8H310V183.5H311V181.4H312V184.9H313V186.0H314V184.5H315V184.8H316V186.0H317V184.8H318V183.3H319V181.1H320V182.5H321V183.8H322V182.9H323V180.9H324V180.3H325V182.5H326V181.5H327V184.9H328V182.3H329V181.9H330V182.1H331V183.3H332V184.8H333V185.4H334V183.7H335V182.9H336V180.7H337V182.7H338V179.4H339V183.9H340V180.3H341V183.8H342V184.1H343V182.2H344V182.3H345V183.4H346V183.9H347V186.7H348V187.1H349V187.8H350V187.5H351V188.0H352V188.5H353V188.8H354V189.0H355V189.9H356V190.2H357V190.3H358V190.7H359V190.8H360V191.3H361V190.2H362V188.1H363V184.7H364V184.2H365V185.2H366V185.8H367V184.8H368V185.5H369V182.7H370V185.5H371V181.5H372V182.4H373V182.7H374V183.6H375V179.8H376V177.5H377V180.9H378V182.2H379V179.7H380V180.9H381V181.0H382V181.9H383V184.3H384V181.1H385V181.2H386V179.3H387V178.8H388V180.9H389V180.4H390V177.4H391V179.1H392V182.1H393V181.6H394V180.5H395V180.1H396V182.3H397V185.4H398V186.2H399V188.4H400V187.3H401V184.6H402V183.5H403V179.8H404V181.5H405V178.3H406V177.3H407V180.4H408V178.4H409V181.6H410V178.0H411V181.1H412V180.4H413V179.1H414V180.8H415V175.9H416V176.0H417V179.5H418V177.4H419V178.1H420V179.5H421V178.6H422V181.7H423V179.1H424V182.9H425V181.6H426V182.4H427V179.7H428V178.0H429V176.7H430V180.3H431V181.8H432V180.1H433V179.8H434V181.3H435V177.7H436V181.0H437V178.1H438V181.1H439V178.2H440V179.2H441V179.7H442V177.1H443V177.9H444V177.9H445V178.4H446V181.9H447V181.3H448V181.8H449V183.1H450V183.0H451V186.1H452V184.8H453V185.5H454V186.7H455V186.1H456V187.0H457V187.9H458V189.1H459V189.1H460V189.9H461V190.6H462V190.6H463V189.9H464V189.3H465V188.3H466V186.7H467V184.8H468V185.2H469V185.9H470V186.3H471V185.1H472V185.4H473V185.2H474V187.3H475V187.7H476V186.3H477V186.6H478V186.9H479V188.2H480V188.5H481V188.4H482V189.0H483V189.3H484V189.4H485V189.4H486V190.2H487V188.9H488V187.3H489V186.1H490V186.3H491V186.7H492V187.0H493V186.9H494V185.5H495V184.7H496V186.7H497V186.9H498V187.0H499V188.6H500V189.2H501V189.2H502V190.6H503V188.9H504V187.3H505V185.1H506V185.1H507V183.8H508V184.3H509V183.5H510V182.5H511V185.0H512V183.4H513V184.8H514V184.8H515V185.0H516V183.6H517V184.7H518V181.5H519V184.7H520V183.5H521V182.1H522V182.2H523V184.0H524V184.7H525V181.2H526V184.0H527V184.0H528V181.1H529V183.5H530V183.0H531V180.8H532V181.3H533V181.8H534V181.1H535V181.3H536V182.5H537V181.8H538V184.2H539V182.6H540V184.1H541V182.4H542V184.7H543V184.7H544V185.0H545V188.0H546V187.2H547V188.9H548V189.7H549V189.8H550V190.4H551V190.0H552V190.5H553V175.0H554V179.7H555V173.8H556V176.6H557V181.2H558V181.6H559V178.3H560V173.1H561V180.8H562V178.5H563V178.2H564V174.6H565V182.0H566V182.0H567V178.2H568V180.1H569V174.9H570V172.4H571V180.0H572V178.9H573V177.9H574V176.3H575V180.2H576V172.2H577V180.0H578V180.2H579V178.6H580V180.4H581V180.3H582V172.5H583V177.8H584V178.7H585V172.9H586V180.1H587V181.6H588V181.6H589V173.2H590V181.7H591V174.1H592V171.1H593V181.2H594V175.0H595V173.3H596V178.8H597V173.2H598V177.7H599V174.4H600V181.3H601V178.7H602V172.5H603V179.1H604V170.0H605V178.8H606V181.9H607V181.7H608V174.7H609V171.8H610V171.5H611V176.7H612V180.0H613V174.0H614V179.3H615V179.1H616V179.7H617V173.5H618V175.7H619V176.2H620V174.6H621V182.2H622V172.3H623V173.4H624V176.9H625V170.7H626V181.9H627V179.7H628V179.4H629V176.8H630V170.2H631V179.6H632V180.2H633V180.2H634V178.7H635V170.8H636V180.8H637V170.2H638V179.7H639V177.7H640V177.5H641V180.3H642V174.3H643V171.3H644V180.6H645V178.4H646V176.3H647V178.9H648V181.2H649V180.8H650V177.8H651V179.3H652V175.2H653V180.7H654V179.3H655V180.6H656V175.3H657V175.7H658V178.3H659V180.4H660V181.8H661V182.2H662V176.4H663V175.0H664V177.8H665V181.3H666V173.1H667V180.8H668V174.5H669V182.2H670V181.7H671V177.0H672V177.1H673V172.3H674V181.3H675V180.8H676V180.3H677V174.6H678V170.0H679V173.0H680V179.4H681V180.8H682V180.7H683V180.3H684V171.8H685V181.2H686V178.1H687V178.8H688V174.8H689V175.8H690V180.4H691V179.6H692V174.6H693V180.4H694V177.7H695V180.6H696V174.2H697V173.8H698V172.5H699V176.6H700V180.9H701V174.8H702V175.8H703V182.1H704V181.2H705V181.1H706V174.0H707V174.7H708V179.9H709V180.4H710V172.6H711V172.4H712V179.9H713V179.3H714V175.6H715V177.8H716V183.0H717V183.0H718V185.3H719V181.8H720V183.8H721V183.9H722V185.7H723V185.1H724V183.9H725V181.8H726V179.6H727V183.1H728V181.2H729V185.3H730V185.3H731V178.9H732V183.4H733V184.5H734V183.8H735V184.8H736V182.9H737V179.1H738V184.6H739V183.0H740V176.7H741V182.8H742V174.2H743V178.6H744V176.3H745V181.9H746V177.9H747V184.0H748V175.0H749V182.5H750V183.1H751V181.2H752V182.8H753V178.1H754V183.9H755V183.7H756V181.1H757V183.4H758V180.8H759V180.9H760V181.8H761V183.1H762V180.9H763V177.8H764V183.6H765V183.7H766V180.4H767V180.5H768V182.3H769V173.6H770V182.4H771V180.1H772V176.3H773V179.9H774V182.1H775V182.2H776V179.9H777V182.5H778V174.1H779V171.8H780V183.2H781V171.6H782V172.8H783V167.5H784V167.5H785V167.7H786V169.3H787V170.1H788V169.6H789V167.5H790V167.5H791V167.5H792V167.5H793V167.5H794V167.5H795V176.4H796V172.2H797V167.5H798V167.5H799V177.4H800V167.5H801V168.0H802V167.6H803V167.5H804V167.5H805V176.2H806V167.5H807V167.5H808V167.5H809V170.7H810V171.2H811V167.5H812V168.7H813V167.5H814V167.5H815V167.5H816V167.5H817V177.1H818V167.5H819V167.5H820V174.0H821V177.5H822V167.5H823V167.5H824V170.1H825V167.5H826V167.5H827V175.8H828V167.5H829V167.5H830V167.5H831V167.5H832V171.7H833V167.5H834V167.6H835V177.3H836V167.5H837V167.5H838V167.5H839V168.7H840V167.5H841V167.5H842V167.5H843V167.5H844V167.5H845V167.5H846V167.5H847V167.5H848V167.5H849V167.5H850V167.5H851V174.9H852V170.1H853V167.5H854V177.9H855V167.5H856V167.5H857V171.8H858V167.5H859V167.5H860V167.6H861V169.4H862V167.5H863V167.6H864V168.5H865V167.5H866V172.0H867V167.5H868V168.3H869V167.5H870V167.5H871V167.5H872V167.5H873V169.4H874V167.5H875V167.5H876V167.5H877V167.5H878V172.7H879V176.4H880V167.5H881V167.5H882V167.5H883V167.5H884V173.1H885V167.5H886V168.0H887V167.5H888V167.5H889V167.5H890V169.3H891V167.5H892V167.5H893V176.0H894V174.5H895V167.5H896V167.5H897V167.5H898V167.5H899V170.7H900V170.6H901V167.5H902V167.5H903V174.2H904V167.6H905V171.6H906V167.6H907V167.6H908V177.9H909V170.2H910V167.5H911V167.5H912V168.7H913V168.3H914V167.5H915V167.5H916V168.0H917V167.5H918V177.7H919V167.5H920V167.5H921V170.0H922V167.5H923V167.5H924V167.5H925V167.5H926V176.6H927V167.5H928V167.8H929V175.5H930V170.0H931V174.9H932V167.5H933V167.7H934V167.5H935V167.5H936V167.5H937V167.5H938V169.6H939V167.5H940V167.5H941V167.5H942V167.5H943V167.5H944V167.5H945V167.5H946V167.5H947V167.6H948V167.5H949V167.5H950V167.5H951V167.5H952V171.6H953V177.8H954V172.2H955V175.4H956V173.7H957V174.1H958V177.4H959V178.1H960V178.0H961V178.8H962V177.0H963V178.5H964V179.5H965V178.8H966V180.4H967V181.1H968V183.3H969V186.0H970V187.8H971V189.5H972V189.5H973V187.8H974V186.6H975V185.2H976V187.8H977V187.7H978V188.8H979V188.7H980V189.2H981V189.9H982V190.2H983V190.6H984V191.1H985V191.1H986V191.2H987V191.1H988V191.3H989V191.4H990V191.3H991V191.4H992V191.5H993V193V193.5H992V193.7H991V193.8H990V193.8H989V193.9H988V194.0H987V194.2H986V194.3H985V194.5H984V194.5H983V194.8H982V194.7H981V195.0H980V195.3H979V196.1H978V196.8H977V197.7H976V198.2H975V197.2H974V197.2H973V196.1H972V195.2H971V195.1H970V196.3H969V197.9H968V198.4H967V200.6H966V202.2H965V203.1H964V204.6H963V205.4H962V205.5H961V206.9H960V206.7H959V207.0H958V210.5H957V210.9H956V208.6H955V212.7H954V212.7H953V215.8H952V215.8H951V210.0H950V214.4H949V217.3H948V217.3H947V215.8H946V217.3H945V217.3H944V217.3H943V217.3H942V217.3H941V215.8H940V215.7H939V215.8H938V208.9H937V215.8H936V217.3H935V217.3H934V207.5H933V217.3H932V217.3H931V215.8H930V217.3H929V213.8H928V217.3H927V214.1H926V217.3H925V217.3H924V215.8H923V211.0H922V215.8H921V217.3H920V208.6H919V217.3H918V212.7H917V215.8H916V217.3H915V215.3H914V215.7H913V213.1H912V217.3H911V217.3H910V215.8H909V217.3H908V213.8H907V215.7H906V210.9H905V215.8H904V215.8H903V215.8H902V214.9H901V217.3H900V213.8H899V215.8H898V215.8H897V215.8H896V217.3H895V215.8H894V210.3H893V215.7H892V217.3H891V215.8H890V208.0H889V217.3H888V207.0H887V215.8H886V215.8H885V215.8H884V215.8H883V215.8H882V215.3H881V215.8H880V215.8H879V215.8H878V212.2H877V210.6H876V215.8H875V217.3H874V215.8H873V215.7H872V217.3H871V217.3H870V214.9H869V217.3H868V207.0H867V217.3H866V215.8H865V217.3H864V215.8H863V207.0H862V217.3H861V211.4H860V215.6H859V212.9H858V217.3H857V213.4H856V215.8H855V207.6H854V213.9H853V215.8H852V215.4H851V215.8H850V213.7H849V215.8H848V215.8H847V217.3H846V215.8H845V212.7H844V217.3H843V211.4H842V217.3H841V215.8H840V215.1H839V217.3H838V215.2H837V217.3H836V217.3H835V214.9H834V215.7H833V217.3H832V217.3H831V217.3H830V214.7H829V217.3H828V215.8H827V215.8H826V215.5H825V213.7H824V217.3H823V215.8H822V217.3H821V215.8H820V209.2H819V209.2H818V215.8H817V215.8H816V217.3H815V215.8H814V217.3H813V215.8H812V217.3H811V215.8H810V211.0H809V217.3H808V210.9H807V213.2H806V217.3H805V209.9H804V215.8H803V215.8H802V217.3H801V213.1H800V215.8H799V215.8H798V217.3H797V215.8H796V208.0H795V214.3H794V217.3H793V208.4H792V210.2H791V217.3H790V215.8H789V210.0H788V217.3H787V217.3H786V212.7H785V217.3H784V215.8H783V215.8H782V209.2H781V203.4H780V210.7H779V205.2H778V208.4H777V205.3H776V203.4H775V203.7H774V211.3H773V203.1H772V203.5H771V205.7H770V207.0H769V209.6H768V204.5H767V207.6H766V204.7H765V204.6H764V205.5H763V202.4H762V202.9H761V204.4H760V205.1H759V204.5H758V204.8H757V202.6H756V207.0H755V203.0H754V207.4H753V202.9H752V206.3H751V207.7H750V203.3H749V202.0H748V202.1H747V201.9H746V208.1H745V201.7H744V202.4H743V203.9H742V208.1H741V208.2H740V203.3H739V207.7H738V206.2H737V205.3H736V206.5H735V203.3H734V201.9H733V203.3H732V202.2H731V202.8H730V201.6H729V202.0H728V202.8H727V201.9H726V201.7H725V202.2H724V201.1H723V202.9H722V202.4H721V202.1H720V202.7H719V201.0H718V199.0H717V199.2H716V208.5H715V215.9H714V207.4H713V213.2H712V207.6H711V208.6H710V208.1H709V205.3H708V205.0H707V206.5H706V205.2H705V209.6H704V205.8H703V206.2H702V204.1H701V205.6H700V204.5H699V211.6H698V214.4H697V211.5H696V215.9H695V207.8H694V209.5H693V213.2H692V206.5H691V205.5H690V210.6H689V208.3H688V205.5H687V213.4H686V204.4H685V205.0H684V205.8H683V206.0H682V206.1H681V209.0H680V207.8H679V208.3H678V205.8H677V207.9H676V207.1H675V211.7H674V205.9H673V204.4H672V210.3H671V204.8H670V215.8H669V204.7H668V204.4H667V214.4H666V204.2H665V208.8H664V204.6H663V214.3H662V204.4H661V205.7H660V212.8H659V212.4H658V206.1H657V205.7H656V208.8H655V206.5H654V206.5H653V208.1H652V206.2H651V206.8H650V213.1H649V210.8H648V212.7H647V215.4H646V206.3H645V206.1H644V206.9H643V208.1H642V213.8H641V205.9H640V205.0H639V215.8H638V206.3H637V209.2H636V213.6H635V213.4H634V210.5H633V207.7H632V215.7H631V205.6H630V214.4H629V213.6H628V207.8H627V205.2H626V212.4H625V214.2H624V212.7H623V209.6H622V208.4H621V204.8H620V205.8H619V209.7H618V207.1H617V211.2H616V206.8H615V215.4H614V207.6H613V214.4H612V207.9H611V213.1H610V210.7H609V204.5H608V205.4H607V210.1H606V214.7H605V207.9H604V211.2H603V214.1H602V206.6H601V215.1H600V206.5H599V208.1H598V213.5H597V205.0H596V214.9H595V207.8H594V205.4H593V206.3H592V207.8H591V204.9H590V205.2H589V205.4H588V204.1H587V212.0H586V209.8H585V206.6H584V215.1H583V207.1H582V209.4H581V206.2H580V206.0H579V215.3H578V208.6H577V206.4H576V211.7H575V207.7H574V206.6H573V206.2H572V212.9H571V206.0H570V211.6H569V206.1H568V205.0H567V204.5H566V212.0H565V212.6H564V203.5H563V204.0H562V203.5H561V212.2H560V206.6H559V212.4H558V206.2H557V207.1H556V205.7H555V210.1H554V208.8H553V194.7H552V194.9H551V195.0H550V195.8H549V195.5H548V197.2H547V196.4H546V198.4H545V197.9H544V197.5H543V197.7H542V199.7H541V199.7H540V200.8H539V199.6H538V201.0H537V201.8H536V199.3H535V200.0H534V201.5H533V200.3H532V201.8H531V202.7H530V200.0H529V199.3H528V200.8H527V202.6H526V200.8H525V202.7H524V199.6H523V200.7H522V203.2H521V200.9H520V199.9H519V203.0H518V200.1H517V201.8H516V200.3H515V202.7H514V202.3H513V201.2H512V199.8H511V199.7H510V198.9H509V199.3H508V198.7H507V197.3H506V197.4H505V197.5H504V196.8H503V196.4H502V196.7H501V197.2H500V197.1H499V197.1H498V198.4H497V199.5H496V199.8H495V199.7H494V198.1H493V198.3H492V199.7H491V200.3H490V200.1H489V197.7H488V197.7H487V196.7H486V196.9H485V196.7H484V195.5H483V195.8H482V197.2H481V196.7H480V197.4H479V196.4H478V197.0H477V198.4H476V198.7H475V196.9H474V198.0H473V198.9H472V197.6H471V199.1H470V197.0H469V197.4H468V198.1H467V197.1H466V196.1H465V196.3H464V195.5H463V195.8H462V195.2H461V195.5H460V196.2H459V196.8H458V197.9H457V197.3H456V199.5H455V197.6H454V199.3H453V199.9H452V199.6H451V202.1H450V202.3H449V200.8H448V202.8H447V205.1H446V202.7H445V201.4H444V204.8H443V203.0H442V204.3H441V205.3H440V202.0H439V203.6H438V205.3H437V204.3H436V205.7H435V207.5H434V203.5H433V206.4H432V205.0H431V202.1H430V207.4H429V202.9H428V202.8H427V204.3H426V202.4H425V206.0H424V206.0H423V203.9H422V207.1H421V203.5H420V207.5H419V206.0H418V207.6H417V205.5H416V208.4H415V204.1H414V202.7H413V205.6H412V202.9H411V204.2H410V206.8H409V205.1H408V207.7H407V201.6H406V204.1H405V202.2H404V201.9H403V202.6H402V198.9H401V196.6H400V196.9H399V198.0H398V200.5H397V204.7H396V202.1H395V203.7H394V202.6H393V206.7H392V203.5H391V208.2H390V206.3H389V207.1H388V206.3H387V204.7H386V203.5H385V204.7H384V205.3H383V201.6H382V202.5H381V205.7H380V201.6H379V202.9H378V202.4H377V202.6H376V202.7H375V200.9H374V201.8H373V204.1H372V201.1H371V204.1H370V201.0H369V200.6H368V202.5H367V200.4H366V200.9H365V199.1H364V198.6H363V199.0H362V195.0H361V194.4H360V194.7H359V196.2H358V197.0H357V197.8H356V198.0H355V198.5H354V197.8H353V199.2H352V199.2H351V197.9H350V198.2H349V200.2H348V198.6H347V201.3H346V200.7H345V200.9H344V199.9H343V199.9H342V203.1H341V204.4H340V202.3H339V204.2H338V202.4H337V205.2H336V203.9H335V203.1H334V205.9H333V203.1H332V204.2H331V202.5H330V204.5H329V202.3H328V203.2H327V203.7H326V203.0H325V204.5H324V205.3H323V203.8H322V206.2H321V204.5H320V204.2H319V204.6H318V204.2H317V203.5H316V205.2H315V203.4H314V202.4H313V204.7H312V202.6H311V201.6H310V203.3H309V203.4H308V204.0H307V204.5H306V206.4H305V204.2H304V207.9H303V208.5H302V204.7H301V205.7H300V204.8H299V203.7H298V204.1H297V203.5H296V203.4H295V203.1H294V205.0H293V204.4H292V204.6H291V204.4H290V207.3H289V205.5H288V205.2H287V204.4H286V204.4H285V202.7H284V202.5H283V199.8H282V200.0H281V199.1H280V200.1H279V201.0H278V201.3H277V199.8H276V198.8H275V199.6H274V197.6H273V196.9H272V196.5H271V196.3H270V195.4H269V195.4H268V195.9H267V196.3H266V197.1H265V197.0H264V198.1H263V198.4H262V198.1H261V201.3H260V201.7H259V199.7H258V200.6H257V201.9H256V200.2H255V199.8H254V202.1H253V200.4H252V203.1H251V200.5H250V201.5H249V202.7H248V201.8H247V202.4H246V203.5H245V201.6H244V202.0H243V202.5H242V202.8H241V200.7H240V202.6H239V202.3H238V202.3H237V199.7H236V201.1H235V201.3H234V201.4H233V201.7H232V201.9H231V199.4H230V199.8H229V200.1H228V202.4H227V202.4H226V199.9H225V202.8H224V200.7H223V198.5H222V203.1H221V198.8H220V203.7H219V198.6H218V198.6H217V198.9H216V203.6H215V199.4H214V199.8H213V199.9H212V199.0H211V199.7H210V206.1H209V204.1H208V205.0H207V199.7H206V200.5H205V201.6H204V205.6H203V201.5H202V206.5H201V202.3H200V203.6H199V202.9H198V203.3H197V202.3H196V201.7H195V200.7H194V199.4H193V198.8H192V198.6H191V198.5H190V198.0H189V198.5H188V198.1H187V197.8H186V197.7H185V196.7H184V197.5H183V197.3H182V196.0H181V197.3H180V195.5H179V195.2H178V195.1H177V194.9H176V194.8H175V194.6H174V195.4H173V194.2H172V194.1H171V194.0H170V195.4H169V195.2H168V197.8H167V196.7H166V196.1H165V196.9H164V198.7H163V196.8H162V197.2H161V200.5H160V196.8H159V200.6H158V197.0H157V200.2H156V196.9H155V200.1H154V196.7H153V199.9H152V197.0H151V196.4H150V196.2H149V198.5H148V195.9H147V196.0H146V196.0H145V197.8H144V196.7H143V196.4H142V196.6H141V197.5H140V195.9H139V195.9H138V195.7H137V195.9H136V195.9H135V196.4H134V196.9H133V197.0H132V196.2H131V197.0H130V196.6H129V196.5H128V199.6H127V199.4H126V198.6H125V196.8H124V196.6H123V196.9H122V196.7H121V196.5H120V196.1H119V198.4H118V198.7H117V198.1H116V198.3H115V195.7H114V195.9H113V195.7H112V196.6H111V197.2H110V195.3H109V195.3H108V195.2H107V194.3H106V193.9H105V193.7H104V193.5H103V193.3H102V193.5H101V193.3H100V193.3H99V193.5H98V193.6H97V193.7H96V193.3H95V193.3H94V193.6H93V194.0H92V193.3H91V193.3H90V193.8H89V194.5H88V193.9H87V193.3H86V193.3H85V193.3H84V193.7H83V195.1H82V194.0H81V193.3H80V193.3H79V193.3H78V193.3H77V193.3H76V193.3H75V193.3H74V193.5H73V193.5H72V193.3H71V193.3H70V193.5H69V193.3H68V193.3H67V193.3H66V193.3H65V193.5H64V193.5H63V193.3H62V193.3H61V193.3H60V193.3H59V193.3H58V193.3H57Z" fill="#4a4676"/>
<rect x="57" y="142" width="936" height="1" fill="#4a30c8"/>
<rect x="57" y="192" width="936" height="1" fill="#4a30c8"/>
</g>
<rect x="223" y="167" width="493" height="1" fill="#8c6660"/>
<rect x="223" y="117" width="1" height="100" fill="#f03018"/>
<rect x="361" y="117" width="1" height="100" fill="#f03018"/>
<rect x="553" y="117" width="1" height="100" fill="#f03018"/>
<rect x="715" y="117" width="1" height="100" fill="#f03018"/>
<rect x="493" y="117" width="2" height="100" fill="#f4b800"/>
<clipPath id="cm1"><rect x="85" y="263" width="825" height="128"/></clipPath>
<clipPath id="cm2"><rect x="85" y="393" width="825" height="126"/></clipPath>
<path clip-path="url(#cm1)" d="M87 328V300.5H88V309.3H89V303.2H90V309.2H91V311.3H92V316.5H93V319.2H94V320.9H95V320.6H96V313.6H97V303.3H98V311.2H99V309.3H100V311.5H101V314.5H102V312.1H103V312.9H104V312.3H105V297.2H106V306.0H107V300.6H108V311.9H109V311.0H110V302.1H111V307.6H112V302.9H113V308.3H114V309.3H115V309.4H116V307.9H117V305.5H118V303.9H119V299.3H120V303.7H121V293.1H122V305.9H123V305.9H124V309.7H125V311.1H126V307.9H127V307.1H128V310.6H129V312.7H130V307.0H131V314.7H132V316.5H133V314.7H134V306.3H135V295.1H136V301.4H137V298.6H138V291.2H139V290.6H140V302.1H141V307.9H142V310.2H143V307.9H144V304.1H145V308.9H146V306.9H147V300.0H148V313.1H149V312.8H150V315.4H151V311.6H152V309.9H153V311.6H154V313.8H155V315.1H156V314.5H157V316.7H158V316.1H159V318.7H160V318.7H161V318.1H162V322.0H163V323.9H164V324.6H165V325.6H166V323.3H167V317.2H168V313.6H169V311.7H170V317.4H171V310.4H172V317.0H173V314.9H174V317.7H175V323.6H176V323.5H177V325.1H178V319.9H179V309.3H180V313.3H181V308.2H182V312.7H183V309.7H184V305.1H185V303.4H186V303.4H187V301.7H188V296.7H189V308.6H190V307.7H191V302.5H192V297.9H193V302.8H194V298.8H195V303.7H196V303.4H197V292.2H198V305.0H199V307.1H200V306.5H201V303.4H202V305.3H203V294.9H204V302.0H205V302.6H206V301.8H207V305.2H208V303.9H209V287.9H210V297.2H211V288.0H212V302.3H213V298.9H214V300.3H215V305.6H216V300.7H217V295.1H218V299.5H219V288.9H220V302.8H221V300.2H222V300.4H223V296.3H224V299.4H225V307.8H226V310.4H227V301.1H228V311.6H229V307.0H230V303.7H231V295.5H232V302.8H233V310.1H234V310.5H235V309.9H236V312.0H237V309.8H238V314.1H239V314.4H240V311.6H241V314.0H242V307.2H243V305.2H244V302.7H245V311.6H246V309.4H247V312.0H248V304.6H249V308.3H250V310.8H251V310.1H252V305.2H253V307.9H254V298.1H255V310.5H256V308.0H257V304.3H258V309.2H259V311.2H260V309.3H261V312.8H262V314.9H263V309.9H264V308.5H265V301.6H266V301.8H267V306.5H268V308.0H269V307.5H270V301.8H271V305.3H272V304.1H273V310.4H274V308.8H275V303.8H276V291.8H277V288.7H278V300.5H279V302.2H280V305.2H281V305.8H282V299.5H283V308.4H284V312.0H285V313.4H286V313.6H287V310.2H288V307.2H289V306.0H290V302.5H291V316.0H292V314.8H293V318.0H294V319.8H295V319.1H296V317.3H297V315.9H298V312.6H299V309.9H300V316.7H301V318.4H302V320.1H303V317.3H304V319.4H305V317.3H306V321.0H307V319.3H308V317.2H309V316.4H310V320.4H311V320.1H312V320.6H313V323.4H314V323.3H315V325.7H316V326.7H317V324.9H318V318.3H319V310.7H320V308.7H321V315.4H322V313.6H323V309.1H324V310.8H325V308.5H326V307.4H327V300.6H328V307.8H329V304.1H330V305.0H331V305.9H332V306.8H333V306.8H334V304.3H335V306.8H336V304.3H337V302.5H338V302.4H339V299.4H340V302.7H341V301.6H342V302.3H343V299.1H344V296.3H345V282.7H346V298.8H347V300.0H348V310.0H349V313.9H350V315.0H351V316.7H352V315.6H353V308.4H354V303.0H355V301.1H356V296.1H357V297.5H358V295.7H359V299.2H360V300.8H361V300.5H362V298.2H363V298.0H364V289.7H365V296.1H366V298.3H367V296.6H368V301.2H369V301.8H370V304.4H371V303.1H372V305.5H373V299.9H374V303.0H375V302.0H376V296.7H377V305.3H378V307.8H379V311.9H380V314.5H381V317.2H382V319.6H383V320.2H384V318.4H385V316.5H386V311.3H387V308.5H388V306.2H389V304.1H390V300.1H391V299.8H392V299.8H393V298.7H394V296.1H395V285.4H396V282.5H397V292.3H398V299.5H399V300.5H400V299.2H401V300.5H402V299.7H403V299.6H404V298.2H405V296.6H406V290.3H407V297.0H408V288.9H409V294.5H410V292.3H411V282.7H412V290.6H413V295.0H414V295.2H415V295.0H416V300.2H417V301.7H418V300.0H419V300.4H420V297.3H421V299.9H422V292.0H423V299.1H424V298.8H425V300.0H426V302.1H427V298.7H428V302.8H429V305.0H430V304.3H431V302.1H432V302.5H433V297.1H434V301.7H435V303.3H436V308.4H437V305.1H438V304.7H439V301.6H440V301.5H441V300.1H442V295.2H443V290.8H444V285.9H445V296.3H446V293.9H447V299.0H448V298.3H449V301.3H450V296.6H451V302.5H452V301.0H453V300.1H454V296.2H455V298.2H456V296.1H457V291.6H458V298.2H459V301.7H460V307.5H461V303.8H462V301.2H463V298.3H464V290.8H465V300.0H466V300.2H467V303.4H468V307.6H469V310.0H470V311.2H471V312.2H472V310.8H473V312.7H474V314.0H475V315.1H476V313.8H477V314.8H478V316.5H479V313.0H480V316.5H481V318.3H482V320.6H483V322.1H484V322.6H485V323.8H486V323.1H487V324.1H488V323.8H489V324.9H490V324.1H491V324.1H492V325.0H493V322.9H494V318.1H495V316.0H496V314.8H497V313.4H498V312.9H499V313.7H500V312.7H501V312.0H502V309.8H503V305.0H504V303.6H505V312.1H506V314.6H507V313.4H508V313.6H509V311.0H510V313.8H511V313.0H512V309.9H513V313.6H514V315.0H515V316.3H516V316.5H517V315.5H518V317.4H519V319.2H520V319.2H521V321.0H522V322.7H523V323.9H524V324.1H525V323.8H526V323.6H527V319.4H528V317.7H529V312.4H530V312.6H531V310.4H532V311.2H533V311.4H534V305.4H535V310.1H536V308.6H537V301.8H538V305.8H539V304.6H540V307.1H541V310.1H542V312.1H543V314.4H544V313.8H545V317.4H546V314.4H547V316.2H548V315.1H549V311.8H550V315.1H551V315.4H552V317.3H553V319.4H554V321.5H555V323.0H556V323.5H557V323.2H558V322.0H559V319.3H560V316.2H561V313.6H562V314.5H563V311.4H564V312.8H565V310.5H566V308.1H567V303.0H568V310.0H569V312.6H570V315.2H571V313.7H572V311.7H573V310.3H574V308.7H575V309.3H576V309.3H577V307.2H578V301.8H579V307.8H580V310.7H581V306.8H582V307.2H583V309.0H584V310.9H585V305.3H586V306.9H587V311.0H588V309.4H589V311.1H590V313.8H591V312.7H592V307.4H593V308.2H594V306.1H595V311.8H596V310.2H597V311.9H598V312.8H599V312.0H600V309.0H601V312.4H602V312.8H603V313.0H604V313.5H605V312.8H606V307.4H607V313.0H608V311.1H609V309.4H610V307.3H611V310.6H612V310.5H613V309.7H614V300.5H615V304.9H616V305.9H617V311.2H618V310.6H619V315.0H620V314.5H621V313.9H622V318.0H623V317.7H624V318.9H625V319.6H626V321.4H627V321.4H628V322.9H629V323.4H630V323.3H631V324.1H632V325.2H633V325.1H634V326.0H635V325.8H636V326.6H637V325.3H638V321.8H639V319.5H640V315.3H641V317.6H642V308.0H643V267.1H644V282.1H645V284.6H646V297.6H647V308.0H648V297.1H649V272.2H650V309.2H651V292.4H652V269.2H653V311.0H654V284.8H655V282.7H656V296.2H657V297.1H658V293.2H659V292.2H660V276.5H661V307.1H662V301.3H663V274.8H664V301.6H665V306.7H666V287.9H667V302.2H668V301.0H669V281.3H670V308.3H671V310.8H672V282.2H673V300.3H674V302.5H675V271.8H676V278.3H677V310.8H678V306.6H679V306.0H680V281.7H681V300.4H682V271.6H683V272.9H684V285.2H685V300.5H686V306.9H687V304.5H688V298.8H689V294.4H690V276.0H691V300.3H692V296.9H693V303.4H694V309.5H695V291.6H696V291.5H697V279.1H698V280.6H699V303.5H700V302.5H701V308.1H702V309.0H703V266.1H704V309.5H705V281.8H706V291.2H707V310.9H708V311.6H709V307.8H710V271.2H711V308.5H712V307.8H713V310.7H714V304.5H715V306.7H716V275.0H717V290.0H718V300.2H719V280.5H720V307.0H721V307.4H722V306.0H723V309.3H724V308.5H725V310.0H726V307.2H727V311.2H728V308.0H729V297.3H730V309.0H731V297.1H732V276.7H733V270.9H734V299.0H735V312.5H736V311.4H737V283.3H738V304.3H739V294.1H740V307.2H741V308.7H742V308.0H743V303.6H744V292.1H745V306.0H746V275.2H747V297.3H748V297.6H749V301.4H750V298.6H751V298.1H752V295.9H753V289.5H754V276.8H755V281.1H756V301.8H757V306.1H758V290.8H759V305.9H760V305.9H761V306.1H762V274.0H763V306.1H764V306.3H765V303.5H766V309.0H767V300.9H768V306.5H769V283.8H770V291.1H771V309.6H772V308.7H773V279.9H774V308.1H775V285.1H776V301.4H777V295.2H778V301.1H779V307.2H780V281.4H781V297.3H782V269.9H783V291.5H784V293.2H785V308.7H786V288.8H787V280.0H788V279.9H789V301.9H790V297.6H791V306.9H792V280.9H793V310.0H794V307.8H795V311.0H796V312.8H797V311.2H798V296.6H799V272.7H800V298.0H801V307.0H802V304.3H803V272.2H804V304.5H805V306.9H806V297.7H807V302.5H808V302.6H809V269.3H810V297.4H811V270.7H812V304.6H813V280.7H814V280.5H815V302.8H816V290.6H817V304.4H818V306.5H819V302.8H820V298.7H821V297.9H822V307.5H823V306.2H824V295.0H825V290.4H826V286.7H827V283.2H828V307.7H829V308.5H830V297.1H831V298.6H832V280.9H833V305.3H834V308.9H835V304.8H836V301.7H837V304.7H838V307.6H839V283.0H840V276.2H841V304.1H842V304.0H843V303.7H844V290.0H845V298.2H846V283.8H847V269.7H848V290.0H849V304.9H850V307.6H851V308.8H852V280.4H853V306.4H854V305.0H855V283.3H856V270.5H857V306.7H858V308.2H859V308.8H860V311.4H861V307.6H862V307.8H863V306.7H864V304.2H865V273.8H866V270.8H867V272.9H868V291.9H869V297.8H870V270.2H871V309.9H872V266.8H873V276.6H874V307.1H875V307.2H876V270.8H877V305.2H878V304.9H879V304.7H880V267.0H881V304.4H882V298.8H883V278.6H884V293.4H885V279.4H886V305.6H887V303.2H888V307.6H889V309.3H890V308.9H891V310.6H892V309.3H893V307.0H894V310.4H895V301.0H896V276.6H897V292.5H898V298.1H899V300.1H900V295.9H901V307.3H902V312.9H903V311.3H904V311.6H905V313.3H906V311.9H907V312.3H908V296.8H909V312.9H910V329V359.0H909V341.5H908V342.0H907V369.5H906V344.6H905V341.6H904V341.4H903V342.2H902V343.1H901V343.4H900V344.6H899V344.0H898V346.0H897V378.0H896V346.2H895V359.9H894V350.2H893V376.8H892V383.4H891V350.5H890V350.9H889V350.2H888V349.3H887V365.6H886V350.1H885V383.6H884V388.5H883V348.3H882V362.4H881V349.9H880V349.8H879V364.2H878V350.2H877V351.9H876V371.5H875V349.9H874V383.9H873V351.7H872V351.1H871V350.4H870V379.2H869V383.2H868V347.3H867V368.8H866V377.9H865V348.8H864V352.3H863V348.1H862V348.5H861V349.5H860V368.1H859V366.3H858V348.5H857V350.8H856V350.8H855V383.8H854V379.7H853V381.7H852V358.8H851V354.2H850V365.6H849V344.6H848V346.4H847V381.7H846V351.2H845V351.5H844V352.2H843V350.1H842V350.7H841V349.6H840V347.8H839V348.2H838V346.2H837V374.2H836V347.8H835V349.3H834V376.2H833V348.9H832V381.1H831V367.0H830V347.5H829V358.0H828V379.4H827V346.9H826V348.3H825V361.7H824V380.9H823V345.8H822V347.5H821V346.7H820V345.2H819V357.3H818V383.2H817V363.7H816V349.5H815V384.5H814V349.6H813V350.9H812V362.3H811V351.2H810V374.8H809V352.3H808V348.9H807V362.7H806V361.8H805V350.4H804V376.8H803V379.0H802V370.5H801V381.0H800V363.3H799V384.7H798V355.5H797V372.0H796V360.8H795V347.5H794V377.1H793V348.5H792V356.8H791V347.7H790V353.8H789V354.8H788V351.4H787V368.6H786V356.9H785V346.3H784V344.4H783V388.0H782V350.9H781V373.0H780V350.4H779V351.0H778V352.7H777V367.3H776V353.8H775V387.9H774V360.0H773V382.6H772V349.9H771V352.1H770V357.6H769V352.1H768V367.7H767V345.3H766V350.3H765V346.1H764V349.5H763V355.3H762V345.4H761V349.1H760V360.7H759V354.6H758V347.2H757V348.9H756V349.1H755V349.8H754V380.1H753V364.6H752V352.1H751V352.4H750V387.3H749V388.4H748V352.9H747V353.7H746V355.5H745V347.8H744V357.7H743V355.7H742V372.5H741V382.5H740V348.2H739V384.1H738V347.5H737V346.1H736V348.6H735V344.5H734V375.4H733V379.4H732V347.3H731V352.4H730V373.5H729V348.5H728V356.1H727V356.7H726V346.1H725V345.0H724V378.4H723V385.2H722V351.4H721V347.0H720V352.2H719V354.6H718V355.3H717V373.3H716V363.9H715V347.2H714V345.3H713V377.9H712V350.2H711V386.5H710V367.1H709V349.9H708V352.0H707V355.6H706V347.5H705V358.7H704V350.2H703V347.8H702V352.8H701V346.1H700V346.0H699V353.2H698V346.0H697V377.3H696V350.6H695V382.0H694V353.1H693V351.3H692V352.4H691V354.4H690V350.4H689V352.4H688V357.6H687V380.4H686V354.1H685V352.7H684V353.3H683V352.1H682V367.7H681V367.6H680V383.4H679V355.5H678V355.9H677V351.0H676V363.7H675V349.7H674V351.0H673V348.1H672V347.8H671V363.0H670V353.3H669V345.8H668V351.3H667V352.2H666V365.9H665V353.8H664V351.0H663V356.1H662V358.9H661V373.9H660V349.8H659V350.6H658V374.0H657V347.8H656V346.3H655V378.6H654V349.5H653V350.8H652V350.3H651V385.5H650V366.3H649V351.6H648V377.9H647V359.1H646V352.5H645V350.3H644V388.6H643V350.6H642V344.0H641V340.6H640V337.5H639V335.0H638V333.0H637V331.2H636V331.6H635V331.4H634V332.0H633V332.3H632V333.1H631V332.9H630V333.0H629V333.3H628V333.9H627V334.3H626V335.6H625V335.7H624V336.3H623V338.4H622V338.8H621V338.4H620V340.4H619V338.9H618V339.5H617V340.2H616V340.9H615V345.0H614V343.7H613V342.8H612V343.3H611V349.2H610V346.6H609V344.8H608V346.4H607V343.5H606V342.5H605V344.8H604V342.8H603V342.7H602V342.4H601V341.3H600V340.6H599V346.4H598V342.0H597V346.5H596V346.8H595V350.8H594V345.1H593V345.7H592V348.2H591V348.3H590V346.0H589V347.5H588V346.0H587V343.6H586V345.6H585V342.8H584V344.4H583V348.5H582V347.8H581V343.5H580V349.3H579V351.9H578V346.6H577V347.8H576V345.7H575V349.2H574V346.6H573V345.3H572V347.1H571V354.7H570V347.5H569V346.8H568V348.4H567V344.5H566V342.9H565V342.2H564V343.8H563V345.2H562V352.2H561V343.9H560V339.6H559V335.5H558V333.1H557V334.0H556V334.4H555V335.5H554V336.3H553V338.0H552V338.4H551V338.8H550V340.5H549V342.1H548V341.6H547V339.9H546V344.5H545V342.4H544V344.2H543V342.0H542V342.5H541V344.6H540V347.2H539V351.0H538V352.3H537V347.8H536V345.3H535V343.7H534V343.5H533V342.5H532V345.5H531V341.8H530V341.2H529V338.2H528V336.4H527V335.0H526V335.0H525V333.7H524V333.8H523V336.7H522V336.0H521V337.5H520V338.7H519V340.7H518V340.3H517V339.3H516V339.5H515V341.4H514V340.8H513V344.7H512V345.0H511V345.4H510V342.3H509V343.9H508V343.1H507V344.1H506V342.2H505V348.5H504V343.4H503V343.9H502V343.7H501V344.1H500V342.8H499V340.6H498V343.8H497V340.5H496V338.7H495V336.1H494V334.9H493V332.5H492V332.5H491V332.3H490V332.2H489V332.0H488V331.9H487V332.9H486V332.7H485V332.8H484V333.4H483V334.6H482V335.6H481V337.7H480V337.8H479V339.2H478V339.5H477V341.8H476V341.0H475V340.1H474V340.2H473V342.2H472V342.0H471V344.6H470V342.8H469V343.6H468V346.0H467V347.2H466V349.0H465V349.8H464V349.6H463V350.0H462V350.5H461V351.7H460V353.8H459V355.8H458V362.9H457V358.7H456V355.9H455V360.3H454V355.4H453V353.1H452V352.2H451V354.4H450V350.8H449V349.9H448V351.5H447V354.7H446V355.6H445V364.8H444V360.6H443V356.9H442V359.7H441V351.6H440V353.1H439V353.1H438V352.9H437V358.1H436V354.8H435V351.6H434V352.8H433V351.4H432V352.2H431V352.8H430V351.3H429V355.4H428V355.2H427V352.8H426V355.1H425V357.4H424V359.3H423V361.4H422V358.8H421V358.9H420V356.0H419V356.6H418V354.1H417V359.0H416V362.6H415V357.6H414V360.3H413V362.5H412V369.5H411V362.8H410V361.2H409V357.8H408V356.8H407V356.9H406V358.6H405V367.5H404V359.9H403V361.9H402V364.0H401V355.8H400V361.1H399V361.0H398V360.3H397V366.7H396V358.5H395V361.9H394V359.7H393V354.2H392V353.0H391V351.8H390V350.9H389V348.5H388V346.4H387V341.2H386V337.4H385V337.2H384V336.6H383V338.7H382V337.8H381V338.7H380V339.7H379V342.5H378V344.7H377V346.0H376V346.2H375V347.1H374V349.0H373V348.3H372V350.9H371V353.4H370V351.6H369V352.3H368V351.7H367V353.9H366V355.9H365V359.3H364V354.7H363V354.9H362V356.3H361V356.2H360V362.4H359V357.4H358V355.0H357V350.9H356V347.1H355V345.0H354V342.7H353V341.4H352V341.3H351V342.6H350V344.1H349V345.4H348V348.1H347V352.7H346V357.7H345V353.8H344V351.8H343V349.7H342V348.3H341V349.0H340V345.8H339V349.2H338V351.1H337V353.8H336V349.6H335V354.1H334V353.8H333V353.3H332V351.4H331V349.0H330V347.0H329V347.7H328V347.0H327V345.2H326V346.8H325V343.9H324V344.3H323V344.1H322V344.3H321V352.4H320V345.8H319V343.6H318V335.8H317V331.5H316V332.0H315V333.6H314V335.5H313V335.3H312V337.2H311V337.0H310V336.5H309V336.2H308V339.3H307V339.5H306V339.9H305V338.8H304V338.2H303V337.7H302V339.2H301V345.2H300V354.6H299V352.3H298V348.4H297V349.5H296V350.7H295V343.9H294V345.0H293V345.3H292V342.0H291V342.0H290V342.6H289V349.9H288V350.7H287V346.0H286V346.5H285V352.8H284V355.3H283V345.0H282V352.0H281V348.8H280V348.6H279V353.5H278V362.9H277V358.5H276V355.7H275V350.3H274V351.7H273V352.1H272V349.1H271V356.9H270V351.3H269V346.5H268V346.9H267V348.7H266V345.7H265V345.6H264V348.1H263V346.8H262V346.9H261V353.5H260V350.8H259V358.1H258V351.7H257V357.8H256V354.3H255V349.2H254V356.1H253V355.4H252V347.3H251V348.6H250V348.7H249V350.2H248V354.4H247V356.5H246V354.5H245V369.0H244V364.7H243V353.6H242V345.4H241V342.1H240V342.6H239V349.9H238V348.3H237V341.4H236V348.1H235V345.2H234V344.4H233V342.9H232V343.9H231V345.2H230V345.1H229V345.9H228V349.4H227V345.9H226V346.9H225V348.3H224V352.6H223V352.2H222V347.9H221V351.6H220V349.3H219V355.3H218V345.9H217V345.0H216V344.5H215V347.0H214V348.0H213V354.3H212V356.9H211V354.3H210V366.2H209V354.9H208V362.6H207V354.4H206V355.6H205V358.6H204V350.9H203V355.2H202V358.2H201V359.9H200V357.9H199V350.0H198V345.9H197V351.7H196V351.2H195V356.8H194V356.7H193V358.8H192V367.4H191V352.1H190V351.1H189V353.3H188V346.9H187V353.1H186V359.6H185V352.5H184V346.6H183V356.9H182V347.7H181V346.9H180V351.0H179V339.4H178V334.1H177V333.2H176V332.7H175V337.2H174V340.9H173V340.2H172V344.5H171V339.8H170V346.0H169V346.9H168V340.5H167V337.7H166V336.8H165V333.9H164V333.4H163V334.0H162V335.7H161V336.7H160V336.9H159V340.0H158V342.1H157V341.4H156V344.1H155V343.7H154V345.1H153V349.0H152V348.6H151V349.1H150V351.5H149V345.2H148V344.1H147V342.7H146V352.7H145V346.2H144V349.5H143V356.5H142V348.8H141V352.8H140V362.6H139V354.3H138V358.2H137V349.6H136V353.1H135V349.5H134V350.0H133V351.1H132V356.7H131V349.8H130V352.1H129V349.8H128V353.9H127V350.1H126V361.2H125V356.8H124V356.3H123V352.1H122V364.0H121V362.4H120V357.7H119V349.5H118V352.1H117V345.9H116V349.0H115V347.2H114V347.0H113V348.3H112V348.8H111V356.3H110V347.7H109V349.3H108V344.8H107V345.3H106V344.2H105V342.9H104V343.3H103V345.2H102V340.3H101V339.6H100V340.7H99V342.4H98V338.8H97V346.7H96V343.5H95V347.4H94V344.9H93V346.4H92V344.4H91V346.6H90V346.1H89V346.1H88V356.4H87Z" fill="#0a3d8a"/>
<path clip-path="url(#cm2)" d="M87 455V428.1H88V439.8H89V439.5H90V439.7H91V445.0H92V447.6H93V445.4H94V443.0H95V437.5H96V438.5H97V439.1H98V430.7H99V432.1H100V439.1H101V440.6H102V438.2H103V435.0H104V438.5H105V440.1H106V438.7H107V440.5H108V437.5H109V435.9H110V433.0H111V437.3H112V436.8H113V441.0H114V440.3H115V438.0H116V431.5H117V439.1H118V439.0H119V428.7H120V437.0H121V439.0H122V433.4H123V432.9H124V434.4H125V437.0H126V434.2H127V437.2H128V425.5H129V437.9H130V439.9H131V440.9H132V440.8H133V435.4H134V439.7H135V428.5H136V427.4H137V437.3H138V433.7H139V439.0H140V440.1H141V437.0H142V436.5H143V438.2H144V439.8H145V431.1H146V437.9H147V438.6H148V434.1H149V437.2H150V427.4H151V437.9H152V439.2H153V437.6H154V440.6H155V441.5H156V439.8H157V438.7H158V444.6H159V445.7H160V444.0H161V448.7H162V448.0H163V450.1H164V451.1H165V452.6H166V451.2H167V448.6H168V440.9H169V438.7H170V444.9H171V446.5H172V445.0H173V446.9H174V448.6H175V451.1H176V451.2H177V450.2H178V446.9H179V440.4H180V425.7H181V432.2H182V430.8H183V436.2H184V436.0H185V436.3H186V425.9H187V430.0H188V433.1H189V438.7H190V433.6H191V434.1H192V436.1H193V434.7H194V422.5H195V423.7H196V427.3H197V417.8H198V422.8H199V433.7H200V434.6H201V431.4H202V421.8H203V431.4H204V429.7H205V419.0H206V421.2H207V427.7H208V425.6H209V415.4H210V430.4H211V430.4H212V427.3H213V433.0H214V426.6H215V426.0H216V427.6H217V429.4H218V425.1H219V417.8H220V428.0H221V422.6H222V426.3H223V427.7H224V432.4H225V437.2H226V436.0H227V438.9H228V437.1H229V432.2H230V427.7H231V425.5H232V433.7H233V434.9H234V433.2H235V434.9H236V442.0H237V443.2H238V437.1H239V441.1H240V443.0H241V443.0H242V439.8H243V437.4H244V430.7H245V439.0H246V436.4H247V436.9H248V440.3H249V442.3H250V440.7H251V438.9H252V433.7H253V429.6H254V426.8H255V435.0H256V435.8H257V435.4H258V434.1H259V436.4H260V440.4H261V442.9H262V442.7H263V442.9H264V442.0H265V429.7H266V439.2H267V436.8H268V438.3H269V435.7H270V429.9H271V430.5H272V435.4H273V436.4H274V431.2H275V426.7H276V430.3H277V418.2H278V428.4H279V431.2H280V424.2H281V438.2H282V434.5H283V437.2H284V440.0H285V440.5H286V440.1H287V439.3H288V436.3H289V438.1H290V430.5H291V440.0H292V441.4H293V441.9H294V444.8H295V443.1H296V440.7H297V442.3H298V444.9H299V437.3H300V443.4H301V446.4H302V447.1H303V444.5H304V445.3H305V446.1H306V446.0H307V447.8H308V444.8H309V443.8H310V445.6H311V449.8H312V450.3H313V449.3H314V451.5H315V452.7H316V453.9H317V451.8H318V447.0H319V443.7H320V436.9H321V442.1H322V443.2H323V439.3H324V439.3H325V436.5H326V436.4H327V429.1H328V435.1H329V435.2H330V435.8H331V433.7H332V433.3H333V434.6H334V433.5H335V435.9H336V434.8H337V431.6H338V434.2H339V432.7H340V428.7H341V431.0H342V431.0H343V426.2H344V421.4H345V411.2H346V428.2H347V430.9H348V437.7H349V441.3H350V443.6H351V443.1H352V442.9H353V437.8H354V434.3H355V432.3H356V429.8H357V430.6H358V423.1H359V425.9H360V425.8H361V426.1H362V427.1H363V427.7H364V419.5H365V428.4H366V428.5H367V425.3H368V425.6H369V429.0H370V431.9H371V433.8H372V435.6H373V429.7H374V431.1H375V431.1H376V425.2H377V434.4H378V433.0H379V438.7H380V441.8H381V443.6H382V446.7H383V448.2H384V445.1H385V444.7H386V441.2H387V437.1H388V433.3H389V433.9H390V432.3H391V431.3H392V426.4H393V424.1H394V421.5H395V421.4H396V411.5H397V422.2H398V425.3H399V427.4H400V428.8H401V429.3H402V431.5H403V430.6H404V428.2H405V426.0H406V423.6H407V423.1H408V421.9H409V419.5H410V420.2H411V412.1H412V420.9H413V424.5H414V427.0H415V428.4H416V428.0H417V426.1H418V427.1H419V425.5H420V427.2H421V423.0H422V420.7H423V426.2H424V425.8H425V428.7H426V430.2H427V431.4H428V431.3H429V427.7H430V433.1H431V431.2H432V428.5H433V426.3H434V434.0H435V434.2H436V434.4H437V435.8H438V435.3H439V434.5H440V430.5H441V428.5H442V423.2H443V422.0H444V414.9H445V426.1H446V420.2H447V425.2H448V429.2H449V431.6H450V431.7H451V430.7H452V429.0H453V425.5H454V420.8H455V425.3H456V424.5H457V419.5H458V432.1H459V434.2H460V435.1H461V431.5H462V430.7H463V427.5H464V420.9H465V428.5H466V428.9H467V431.6H468V430.7H469V436.3H470V438.5H471V439.7H472V440.9H473V440.1H474V440.3H475V440.2H476V440.2H477V441.9H478V443.4H479V440.5H480V444.3H481V445.6H482V447.0H483V449.7H484V450.8H485V451.1H486V450.2H487V450.7H488V451.0H489V451.6H490V452.1H491V451.8H492V451.9H493V450.2H494V447.0H495V443.7H496V439.4H497V440.5H498V440.7H499V440.4H500V438.9H501V439.1H502V435.2H503V437.9H504V431.4H505V440.1H506V442.2H507V441.5H508V442.4H509V441.3H510V441.5H511V440.6H512V437.6H513V440.4H514V440.7H515V442.4H516V443.2H517V444.8H518V445.1H519V445.9H520V447.3H521V447.4H522V448.7H523V450.6H524V451.4H525V450.9H526V450.0H527V448.2H528V444.8H529V440.0H530V439.7H531V439.9H532V438.4H533V436.8H534V433.5H535V435.0H536V434.6H537V429.9H538V435.2H539V434.8H540V435.9H541V439.8H542V441.6H543V442.2H544V443.9H545V443.7H546V443.7H547V442.1H548V441.6H549V439.3H550V443.6H551V440.8H552V444.6H553V446.4H554V447.8H555V450.0H556V449.8H557V449.6H558V448.2H559V446.8H560V444.0H561V442.3H562V442.9H563V442.9H564V442.2H565V438.6H566V437.6H567V431.4H568V438.6H569V440.6H570V439.9H571V442.4H572V441.2H573V441.6H574V439.4H575V440.1H576V437.1H577V430.3H578V430.5H579V434.0H580V433.3H581V434.5H582V431.6H583V439.3H584V436.8H585V434.2H586V437.7H587V439.9H588V440.3H589V441.4H590V441.5H591V437.4H592V438.9H593V439.7H594V434.9H595V438.7H596V437.6H597V440.6H598V439.5H599V436.1H600V439.7H601V438.3H602V439.3H603V438.2H604V438.4H605V439.0H606V436.0H607V440.8H608V440.8H609V439.0H610V436.9H611V436.9H612V435.4H613V432.8H614V429.4H615V433.2H616V438.7H617V435.8H618V442.2H619V442.6H620V442.0H621V440.8H622V443.6H623V445.2H624V444.3H625V446.1H626V448.8H627V450.0H628V450.5H629V451.1H630V451.1H631V451.7H632V452.6H633V452.7H634V453.2H635V453.4H636V453.6H637V452.0H638V450.0H639V446.3H640V443.8H641V444.6H642V399.6H643V433.4H644V435.1H645V431.1H646V430.9H647V402.8H648V431.5H649V426.8H650V411.7H651V434.8H652V421.0H653V400.6H654V433.4H655V397.4H656V435.2H657V404.9H658V436.5H659V431.9H660V435.4H661V434.2H662V430.0H663V435.5H664V431.0H665V430.9H666V433.6H667V429.3H668V432.0H669V430.2H670V399.5H671V415.9H672V419.0H673V432.5H674V416.5H675V433.3H676V430.7H677V430.9H678V399.3H679V428.1H680V430.4H681V429.8H682V405.6H683V430.3H684V432.9H685V435.2H686V409.2H687V423.0H688V437.4H689V439.8H690V431.5H691V409.3H692V433.2H693V432.4H694V427.2H695V428.0H696V436.3H697V430.6H698V433.0H699V420.0H700V415.8H701V421.5H702V423.4H703V434.1H704V413.9H705V438.1H706V435.6H707V436.9H708V435.2H709V437.6H710V437.0H711V426.3H712V437.4H713V430.0H714V433.9H715V399.0H716V397.4H717V431.2H718V431.2H719V428.9H720V432.5H721V432.7H722V420.1H723V416.8H724V432.3H725V437.3H726V430.9H727V421.3H728V408.6H729V432.6H730V404.1H731V403.4H732V422.2H733V436.5H734V437.2H735V397.2H736V438.6H737V437.1H738V428.4H739V430.7H740V428.1H741V418.6H742V399.4H743V432.8H744V431.5H745V432.6H746V400.2H747V416.1H748V415.7H749V431.0H750V429.9H751V439.6H752V438.3H753V402.1H754V435.5H755V427.1H756V438.9H757V407.5H758V422.7H759V410.9H760V435.6H761V430.1H762V420.5H763V410.0H764V425.0H765V437.3H766V435.0H767V434.9H768V428.5H769V424.3H770V431.9H771V402.3H772V420.2H773V405.7H774V403.4H775V416.1H776V437.5H777V437.3H778V438.9H779V435.9H780V436.8H781V438.1H782V436.1H783V428.6H784V411.8H785V437.3H786V399.8H787V425.0H788V439.0H789V400.2H790V434.2H791V432.1H792V436.9H793V437.9H794V430.4H795V414.2H796V430.6H797V436.0H798V405.0H799V437.6H800V435.3H801V437.4H802V417.9H803V423.0H804V438.0H805V435.1H806V435.3H807V436.5H808V434.2H809V433.4H810V432.7H811V426.0H812V424.1H813V414.2H814V435.5H815V427.7H816V426.8H817V399.0H818V428.5H819V420.4H820V422.5H821V430.2H822V422.0H823V429.8H824V430.2H825V413.6H826V408.2H827V433.5H828V435.1H829V429.7H830V437.2H831V430.3H832V432.6H833V436.7H834V417.6H835V404.4H836V428.8H837V432.7H838V434.3H839V433.7H840V431.3H841V408.6H842V408.5H843V430.5H844V416.7H845V404.9H846V428.2H847V426.7H848V406.5H849V401.7H850V438.0H851V429.0H852V408.5H853V428.6H854V411.4H855V410.2H856V438.4H857V430.8H858V432.2H859V420.0H860V428.1H861V405.0H862V434.0H863V433.5H864V433.8H865V436.8H866V407.9H867V435.0H868V405.1H869V435.2H870V433.1H871V434.3H872V433.4H873V410.5H874V400.7H875V434.7H876V432.7H877V433.5H878V432.8H879V431.7H880V432.8H881V420.0H882V414.3H883V427.7H884V407.0H885V409.4H886V435.5H887V401.6H888V436.3H889V438.6H890V411.4H891V420.7H892V436.3H893V422.0H894V417.8H895V421.1H896V440.3H897V420.9H898V440.8H899V425.2H900V433.0H901V441.5H902V426.6H903V442.5H904V413.7H905V416.5H906V442.4H907V444.4H908V427.8H909V444.9H910V456V467.3H909V470.3H908V473.6H907V474.0H906V471.1H905V474.3H904V475.6H903V473.4H902V472.6H901V505.5H900V497.3H899V481.6H898V481.1H897V477.5H896V472.7H895V476.8H894V480.4H893V481.2H892V472.5H891V500.9H890V474.6H889V481.2H888V486.5H887V478.7H886V484.3H885V504.8H884V480.0H883V476.7H882V479.8H881V477.3H880V477.8H879V476.4H878V478.4H877V476.7H876V477.5H875V492.3H874V506.7H873V479.3H872V502.4H871V478.3H870V509.2H869V511.6H868V482.3H867V475.0H866V485.3H865V483.9H864V484.5H863V486.4H862V489.2H861V503.3H860V490.7H859V490.0H858V482.5H857V491.8H856V486.3H855V485.9H854V473.7H853V476.1H852V508.3H851V480.7H850V515.9H849V512.4H848V491.0H847V514.2H846V509.6H845V489.7H844V514.8H843V471.3H842V513.1H841V470.8H840V472.4H839V472.4H838V498.2H837V508.1H836V500.2H835V475.1H834V477.6H833V502.5H832V506.0H831V476.9H830V508.2H829V473.8H828V487.2H827V486.7H826V477.4H825V496.9H824V476.4H823V478.5H822V492.0H821V506.9H820V482.0H819V499.1H818V492.6H817V511.4H816V512.5H815V480.6H814V512.7H813V496.3H812V494.7H811V475.9H810V484.5H809V478.2H808V515.5H807V485.9H806V478.5H805V477.5H804V477.0H803V504.3H802V477.4H801V501.7H800V473.1H799V481.3H798V477.2H797V477.6H796V485.7H795V497.6H794V475.7H793V482.2H792V475.6H791V513.4H790V483.5H789V484.2H788V507.4H787V475.1H786V485.5H785V474.6H784V496.9H783V475.3H782V494.5H781V482.6H780V478.7H779V478.4H778V513.9H777V485.4H776V493.3H775V507.5H774V499.0H773V476.3H772V495.6H771V474.4H770V477.0H769V477.8H768V475.8H767V505.5H766V497.2H765V474.5H764V497.4H763V513.4H762V472.5H761V505.4H760V495.1H759V475.7H758V512.4H757V480.1H756V477.1H755V476.4H754V475.9H753V476.3H752V506.1H751V512.3H750V478.4H749V486.7H748V481.5H747V501.4H746V514.3H745V476.4H744V501.7H743V480.3H742V476.0H741V508.2H740V475.8H739V478.1H738V481.3H737V473.9H736V496.0H735V504.3H734V476.4H733V508.5H732V476.1H731V502.3H730V507.5H729V490.0H728V493.0H727V490.9H726V486.7H725V485.3H724V479.0H723V485.7H722V481.1H721V493.3H720V476.2H719V488.3H718V473.9H717V486.7H716V488.7H715V474.5H714V477.2H713V498.3H712V474.4H711V471.5H710V475.3H709V475.3H708V474.6H707V490.5H706V500.1H705V505.4H704V476.8H703V473.1H702V480.2H701V492.2H700V508.4H699V513.1H698V509.4H697V485.5H696V487.6H695V513.4H694V514.3H693V475.6H692V473.0H691V478.7H690V501.8H689V475.7H688V476.0H687V493.6H686V490.1H685V498.0H684V480.1H683V483.0H682V475.0H681V475.9H680V490.7H679V511.0H678V480.7H677V503.8H676V512.9H675V494.8H674V478.8H673V492.5H672V473.0H671V502.4H670V501.1H669V494.6H668V473.6H667V474.7H666V477.0H665V510.1H664V486.6H663V492.8H662V487.0H661V479.5H660V507.2H659V493.8H658V484.8H657V479.4H656V479.8H655V493.7H654V481.9H653V479.6H652V479.5H651V481.5H650V479.0H649V504.0H648V506.4H647V477.3H646V476.9H645V483.3H644V503.1H643V482.7H642V471.1H641V467.4H640V464.1H639V461.9H638V459.1H637V458.1H636V458.7H635V458.7H634V458.7H633V459.1H632V459.6H631V459.8H630V460.2H629V461.1H628V461.0H627V460.6H626V462.1H625V462.7H624V464.4H623V463.5H622V464.3H621V465.0H620V464.3H619V465.8H618V464.6H617V465.7H616V467.3H615V467.8H614V469.2H613V473.7H612V469.3H611V475.7H610V471.6H609V473.1H608V474.1H607V469.3H606V472.1H605V471.5H604V468.7H603V468.0H602V467.8H601V469.3H600V468.5H599V470.1H598V468.0H597V470.1H596V473.7H595V476.2H594V475.3H593V474.4H592V473.0H591V472.4H590V471.7H589V470.4H588V470.2H587V468.6H586V469.7H585V470.1H584V469.7H583V469.5H582V473.6H581V471.7H580V471.3H579V477.8H578V473.6H577V473.0H576V476.2H575V471.3H574V471.2H573V471.4H572V472.3H571V479.8H570V477.5H569V472.4H568V472.6H567V472.8H566V468.3H565V467.9H564V469.7H563V471.5H562V478.0H561V470.2H560V469.6H559V462.6H558V460.0H557V462.2H556V461.4H555V461.7H554V463.5H553V464.1H552V466.0H551V466.3H550V466.9H549V469.2H548V466.6H547V467.2H546V466.6H545V470.9H544V471.5H543V469.9H542V467.9H541V469.5H540V469.7H539V472.6H538V477.8H537V473.4H536V472.4H535V473.3H534V472.3H533V471.5H532V469.0H531V468.4H530V466.9H529V464.7H528V462.3H527V462.4H526V461.0H525V460.3H524V461.5H523V461.6H522V463.9H521V465.1H520V465.4H519V467.3H518V467.2H517V466.7H516V468.7H515V467.2H514V466.4H513V466.4H512V467.5H511V469.4H510V471.1H509V468.8H508V469.8H507V473.4H506V470.7H505V474.8H504V473.8H503V471.1H502V470.0H501V472.0H500V468.4H499V467.1H498V468.7H497V468.1H496V465.6H495V463.0H494V461.4H493V459.2H492V459.3H491V459.2H490V459.1H489V459.1H488V458.7H487V459.9H486V459.5H485V459.6H484V460.2H483V462.3H482V462.2H481V463.6H480V464.1H479V465.6H478V465.3H477V466.4H476V466.5H475V466.7H474V467.0H473V468.2H472V468.9H471V469.9H470V469.3H469V473.1H468V472.0H467V472.1H466V473.4H465V473.9H464V473.5H463V478.2H462V475.6H461V478.6H460V478.9H459V481.2H458V487.1H457V487.2H456V484.1H455V483.3H454V480.1H453V481.2H452V476.4H451V475.5H450V477.8H449V478.1H448V481.1H447V481.8H446V482.4H445V489.3H444V483.2H443V484.4H442V484.3H441V478.2H440V478.8H439V477.5H438V477.1H437V484.1H436V480.0H435V477.5H434V477.4H433V476.4H432V477.3H431V478.8H430V476.5H429V481.4H428V481.1H427V478.8H426V477.9H425V486.2H424V484.5H423V488.1H422V483.2H421V481.5H420V482.9H419V480.7H418V482.2H417V482.0H416V481.5H415V484.2H414V485.2H413V486.4H412V493.7H411V488.9H410V491.6H409V485.4H408V481.3H407V484.5H406V487.3H405V494.4H404V486.7H403V484.0H402V480.9H401V481.0H400V482.4H399V486.9H398V483.6H397V491.8H396V490.9H395V482.7H394V480.4H393V481.3H392V480.7H391V477.7H390V474.9H389V472.8H388V471.6H387V467.7H386V464.1H385V463.9H384V463.6H383V464.1H382V465.1H381V466.5H380V467.6H379V469.0H378V469.1H377V471.7H376V473.5H375V475.2H374V473.7H373V475.1H372V478.8H371V477.5H370V479.4H369V479.3H368V477.5H367V478.1H366V480.3H365V482.5H364V485.5H363V482.1H362V478.9H361V480.2H360V487.7H359V481.4H358V480.8H357V474.6H356V471.5H355V470.2H354V469.1H353V467.5H352V467.8H351V469.3H350V469.6H349V471.6H348V475.2H347V474.3H346V484.5H345V481.5H344V476.1H343V474.0H342V473.1H341V473.3H340V470.6H339V472.5H338V475.0H337V479.8H336V475.6H335V476.3H334V475.3H333V475.1H332V474.3H331V474.5H330V472.7H329V471.9H328V472.8H327V471.0H326V469.0H325V467.9H324V469.8H323V470.7H322V472.7H321V477.9H320V472.3H319V468.3H318V462.1H317V458.9H316V459.5H315V460.9H314V461.5H313V462.7H312V464.6H311V462.5H310V464.6H309V464.4H308V464.6H307V463.3H306V467.7H305V468.1H304V465.3H303V465.5H302V465.0H301V468.5H300V480.4H299V479.3H298V475.2H297V478.0H296V473.7H295V470.6H294V470.9H293V469.2H292V468.0H291V469.5H290V470.2H289V470.5H288V471.0H287V473.9H286V473.7H285V480.1H284V476.6H283V475.5H282V475.0H281V475.4H280V473.1H279V475.3H278V487.0H277V476.3H276V474.1H275V475.7H274V474.6H273V475.5H272V478.2H271V482.5H270V473.8H269V475.7H268V476.1H267V473.6H266V474.5H265V474.6H264V476.5H263V473.5H262V474.5H261V473.7H260V473.6H259V483.6H258V474.5H257V475.7H256V480.1H255V473.4H254V474.0H253V480.3H252V482.5H251V474.6H250V476.3H249V478.6H248V477.2H247V480.7H246V482.9H245V493.1H244V480.2H243V477.2H242V479.5H241V474.2H240V473.5H239V471.7H238V472.6H237V468.8H236V468.8H235V474.3H234V473.5H233V473.2H232V472.5H231V474.0H230V471.5H229V477.1H228V471.8H227V472.3H226V473.5H225V472.9H224V473.4H223V474.1H222V474.3H221V473.0H220V481.6H219V478.2H218V475.7H217V476.8H216V482.8H215V479.6H214V476.6H213V478.1H212V479.5H211V480.8H210V490.8H209V475.9H208V475.2H207V476.0H206V476.2H205V481.1H204V480.8H203V486.9H202V472.3H201V471.2H200V483.6H199V480.0H198V478.4H197V476.9H196V473.6H195V473.1H194V476.6H193V477.6H192V477.6H191V487.5H190V484.1H189V476.5H188V473.9H187V484.6H186V484.1H185V476.6H184V478.1H183V476.0H182V472.0H181V480.4H180V474.8H179V464.5H178V460.8H177V460.1H176V461.1H175V465.3H174V469.1H173V468.9H172V472.2H171V469.7H170V474.2H169V471.9H168V463.6H167V463.7H166V459.7H165V459.9H164V461.4H163V461.9H162V464.7H161V464.0H160V463.6H159V464.8H158V471.2H157V467.0H156V468.2H155V470.8H154V477.6H153V476.5H152V474.5H151V484.0H150V474.2H149V476.4H148V479.0H147V475.5H146V486.6H145V484.0H144V475.5H143V484.1H142V477.7H141V472.5H140V472.5H139V471.2H138V471.8H137V476.6H136V474.6H135V471.7H134V472.6H133V471.3H132V473.1H131V478.5H130V478.9H129V489.3H128V476.8H127V474.0H126V487.8H125V476.8H124V481.0H123V478.9H122V477.7H121V476.9H120V477.4H119V479.3H118V479.7H117V479.4H116V476.8H115V470.8H114V476.7H113V474.8H112V477.3H111V479.2H110V473.0H109V472.2H108V476.3H107V476.6H106V472.9H105V470.3H104V471.1H103V469.3H102V469.8H101V468.7H100V470.5H99V479.0H98V470.6H97V470.6H96V474.5H95V468.1H94V466.1H93V464.5H92V468.4H91V466.7H90V472.7H89V479.7H88V482.9H87Z" fill="#0a3d8a"/>
<rect x="87" y="328" width="823" height="1" fill="#0a30e8"/>
<rect x="87" y="455" width="823" height="1" fill="#0a30e8"/>
<rect x="317" y="263" width="1" height="256" fill="#f03018"/>
<rect x="638" y="263" width="1" height="256" fill="#f03018"/>
<rect x="538" y="263" width="2" height="256" fill="#f8f000"/>
<path d="M415.50 265.00 L418.39 268.18 L421.26 271.35 L424.09 274.52 L426.87 277.70 L429.58 280.88 L432.21 284.05 L434.73 287.23 L437.13 290.40 L439.40 293.57 L441.52 296.75 L443.48 299.93 L445.27 303.10 L446.88 306.27 L448.29 309.45 L449.50 312.62 L450.50 315.80 L451.28 318.98 L451.85 322.15 L452.19 325.32 L452.30 328.50M452.30 265.00 L449.41 268.18 L446.54 271.35 L443.71 274.52 L440.93 277.70 L438.22 280.88 L435.59 284.05 L433.07 287.23 L430.67 290.40 L428.40 293.57 L426.28 296.75 L424.32 299.93 L422.53 303.10 L420.92 306.27 L419.51 309.45 L418.30 312.62 L417.30 315.80 L416.52 318.98 L415.95 322.15 L415.61 325.32 L415.50 328.50M415.50 391.00 L418.39 387.88 L421.26 384.75 L424.09 381.62 L426.87 378.50 L429.58 375.38 L432.21 372.25 L434.73 369.12 L437.13 366.00 L439.40 362.88 L441.52 359.75 L443.48 356.62 L445.27 353.50 L446.88 350.38 L448.29 347.25 L449.50 344.12 L450.50 341.00 L451.28 337.88 L451.85 334.75 L452.19 331.62 L452.30 328.50M452.30 391.00 L449.41 387.88 L446.54 384.75 L443.71 381.62 L440.93 378.50 L438.22 375.38 L435.59 372.25 L433.07 369.12 L430.67 366.00 L428.40 362.88 L426.28 359.75 L424.32 356.62 L422.53 353.50 L420.92 350.38 L419.51 347.25 L418.30 344.12 L417.30 341.00 L416.52 337.88 L415.95 334.75 L415.61 331.62 L415.50 328.50M415.50 393.00 L418.39 396.12 L421.26 399.25 L424.09 402.38 L426.87 405.50 L429.58 408.62 L432.21 411.75 L434.73 414.88 L437.13 418.00 L439.40 421.12 L441.52 424.25 L443.48 427.38 L445.27 430.50 L446.88 433.62 L448.29 436.75 L449.50 439.88 L450.50 443.00 L451.28 446.12 L451.85 449.25 L452.19 452.38 L452.30 455.50M452.30 393.00 L449.41 396.12 L446.54 399.25 L443.71 402.38 L440.93 405.50 L438.22 408.62 L435.59 411.75 L433.07 414.88 L430.67 418.00 L428.40 421.12 L426.28 424.25 L424.32 427.38 L422.53 430.50 L420.92 433.62 L419.51 436.75 L418.30 439.88 L417.30 443.00 L416.52 446.12 L415.95 449.25 L415.61 452.38 L415.50 455.50M415.50 519.00 L418.39 515.83 L421.26 512.65 L424.09 509.48 L426.87 506.30 L429.58 503.12 L432.21 499.95 L434.73 496.77 L437.13 493.60 L439.40 490.43 L441.52 487.25 L443.48 484.07 L445.27 480.90 L446.88 477.73 L448.29 474.55 L449.50 471.38 L450.50 468.20 L451.28 465.02 L451.85 461.85 L452.19 458.68 L452.30 455.50M452.30 519.00 L449.41 515.83 L446.54 512.65 L443.71 509.48 L440.93 506.30 L438.22 503.12 L435.59 499.95 L433.07 496.77 L430.67 493.60 L428.40 490.43 L426.28 487.25 L424.32 484.07 L422.53 480.90 L420.92 477.73 L419.51 474.55 L418.30 471.38 L417.30 468.20 L416.52 465.02 L415.95 461.85 L415.61 458.68 L415.50 455.50" fill="none" stroke="#7a7a7a" stroke-width="1"/>
<rect x="415" y="264.5" width="1.2" height="254.5" fill="#777"/><rect x="451.8" y="264.5" width="1.2" height="254.5" fill="#777"/>
<path d="M407.5 267.5 L414 270.8 L407.5 274.1 Z" fill="#444" stroke="#222" stroke-width="0.6"/>
<path d="M460.5 267.5 L454 270.8 L460.5 274.1 Z" fill="#444" stroke="#222" stroke-width="0.6"/>
<path d="M407.5 396 L414 399.3 L407.5 402.6 Z" fill="#444" stroke="#222" stroke-width="0.6"/>
<path d="M460.5 396 L454 399.3 L460.5 402.6 Z" fill="#444" stroke="#222" stroke-width="0.6"/>
<text x="313.1" y="233" font-size="10.5" fill="#505050" letter-spacing="0.55">Marker 1</text>
<path d="M311.6 234.5 H322.6 L317.1 244.3 Z" fill="#f06a5a" stroke="#f02a10" stroke-width="1"/>
<text x="634.5" y="233" font-size="10.5" fill="#505050" letter-spacing="0.55">Marker 2</text>
<path d="M633.0 234.5 H644.0 L638.5 244.3 Z" fill="#f06a5a" stroke="#f02a10" stroke-width="1"/>
<rect x="910" y="224" width="7" height="295" fill="url(#gStrip)"/>
<ellipse cx="913.5" cy="371" rx="3" ry="2.5" fill="#c8c8c8"/><ellipse cx="913.5" cy="372.5" rx="3" ry="2" fill="#f4f4f4"/>
<rect x="917" y="224" width="76" height="295" fill="#000"/>
<text x="919" y="236.7" font-size="10.2" fill="#30f030" letter-spacing="0.6">-7.35</text>
<text x="947" y="236.7" font-size="10.2" fill="#30f030" letter-spacing="0.6">-8.16</text>
<rect x="917" y="241.5" width="56" height="1" fill="#9a9a9a"/>
<text x="975" y="245.8" font-size="10.5" fill="#30f030" letter-spacing="0.5">0</text>
<rect x="917" y="288.7" width="56" height="1" fill="#9a9a9a"/>
<text x="975" y="293.0" font-size="10.5" fill="#30f030" letter-spacing="0.5">-6</text>
<rect x="917" y="330.5" width="56" height="1" fill="#9a9a9a"/>
<text x="975" y="334.8" font-size="10.5" fill="#30f030" letter-spacing="0.5">-12</text>
<rect x="917" y="378.8" width="56" height="1" fill="#9a9a9a"/>
<text x="975" y="383.1" font-size="10.5" fill="#30f030" letter-spacing="0.5">-20</text>
<rect x="917" y="426.2" width="56" height="1" fill="#9a9a9a"/>
<text x="975" y="430.5" font-size="10.5" fill="#30f030" letter-spacing="0.5">-30</text>
<rect x="917" y="486.4" width="56" height="1" fill="#9a9a9a"/>
<text x="975" y="490.7" font-size="10.5" fill="#30f030" letter-spacing="0.5">-60</text>
<rect x="919" y="241.5" width="24" height="3" fill="#4a1414"/>
<rect x="947" y="241.5" width="24" height="3" fill="#4a1414"/>
<rect x="919" y="246.5" width="24" height="3" fill="#4a1414"/>
<rect x="947" y="246.5" width="24" height="3" fill="#4a1414"/>
<rect x="919" y="251.5" width="24" height="3" fill="#4a1414"/>
<rect x="947" y="251.5" width="24" height="3" fill="#4a1414"/>
<rect x="919" y="256.5" width="24" height="3" fill="#4a1414"/>
<rect x="947" y="256.5" width="24" height="3" fill="#4a1414"/>
<rect x="919" y="261.5" width="24" height="3" fill="#4a1414"/>
<rect x="947" y="261.5" width="24" height="3" fill="#4a1414"/>
<rect x="919" y="266.5" width="24" height="3" fill="#4a1414"/>
<rect x="947" y="266.5" width="24" height="3" fill="#4a1414"/>
<rect x="919" y="271.5" width="24" height="3" fill="#4a1414"/>
<rect x="947" y="271.5" width="24" height="3" fill="#4a1414"/>
<rect x="919" y="276.5" width="24" height="3" fill="#4a1414"/>
<rect x="947" y="276.5" width="24" height="3" fill="#4a1414"/>
<rect x="919" y="281.5" width="24" height="3" fill="#4a1414"/>
<rect x="947" y="281.5" width="24" height="3" fill="#4a1414"/>
<rect x="919" y="286.5" width="24" height="3" fill="#4a1414"/>
<rect x="947" y="286.5" width="24" height="3" fill="#4a1414"/>
<rect x="919" y="291.5" width="24" height="3" fill="#4a4414"/>
<rect x="947" y="291.5" width="24" height="3" fill="#4a4414"/>
<rect x="919" y="296.5" width="24" height="3" fill="#fcf838"/>
<rect x="947" y="296.5" width="24" height="3" fill="#4a4414"/>
<rect x="919" y="301.5" width="24" height="3" fill="#4a4414"/>
<rect x="947" y="301.5" width="24" height="3" fill="#fcf838"/>
<rect x="919" y="306.5" width="24" height="3" fill="#fcf838"/>
<rect x="947" y="306.5" width="24" height="3" fill="#fcf838"/>
<rect x="919" y="311.5" width="24" height="3" fill="#fcf838"/>
<rect x="947" y="311.5" width="24" height="3" fill="#fcf838"/>
<rect x="919" y="316.5" width="24" height="3" fill="#fcf838"/>
<rect x="947" y="316.5" width="24" height="3" fill="#fcf838"/>
<rect x="919" y="321.5" width="24" height="3" fill="#fcf838"/>
<rect x="947" y="321.5" width="24" height="3" fill="#fcf838"/>
<rect x="919" y="326.5" width="24" height="3" fill="#fcf838"/>
<rect x="947" y="326.5" width="24" height="3" fill="#fcf838"/>
<rect x="919" y="331.5" width="24" height="3" fill="#fcf838"/>
<rect x="947" y="331.5" width="24" height="3" fill="#fcf838"/>
<rect x="919" y="336.5" width="24" height="3" fill="#5af03a"/>
<rect x="947" y="336.5" width="24" height="3" fill="#5af03a"/>
<rect x="919" y="341.5" width="24" height="3" fill="#5af03a"/>
<rect x="947" y="341.5" width="24" height="3" fill="#5af03a"/>
<rect x="919" y="346.5" width="24" height="3" fill="#5af03a"/>
<rect x="947" y="346.5" width="24" height="3" fill="#5af03a"/>
<rect x="919" y="351.5" width="24" height="3" fill="#5af03a"/>
<rect x="947" y="351.5" width="24" height="3" fill="#5af03a"/>
<rect x="919" y="356.5" width="24" height="3" fill="#5af03a"/>
<rect x="947" y="356.5" width="24" height="3" fill="#5af03a"/>
<rect x="919" y="361.5" width="24" height="3" fill="#5af03a"/>
<rect x="947" y="361.5" width="24" height="3" fill="#5af03a"/>
<rect x="919" y="366.5" width="24" height="3" fill="#5af03a"/>
<rect x="947" y="366.5" width="24" height="3" fill="#5af03a"/>
<rect x="919" y="371.5" width="24" height="3" fill="#5af03a"/>
<rect x="947" y="371.5" width="24" height="3" fill="#5af03a"/>
<rect x="919" y="376.5" width="24" height="3" fill="#5af03a"/>
<rect x="947" y="376.5" width="24" height="3" fill="#5af03a"/>
<rect x="919" y="381.5" width="24" height="3" fill="#5af03a"/>
<rect x="947" y="381.5" width="24" height="3" fill="#5af03a"/>
<rect x="919" y="386.5" width="24" height="3" fill="#5af03a"/>
<rect x="947" y="386.5" width="24" height="3" fill="#5af03a"/>
<rect x="919" y="391.5" width="24" height="3" fill="#5af03a"/>
<rect x="947" y="391.5" width="24" height="3" fill="#5af03a"/>
<rect x="919" y="396.5" width="24" height="3" fill="#5af03a"/>
<rect x="947" y="396.5" width="24" height="3" fill="#5af03a"/>
<rect x="919" y="401.5" width="24" height="3" fill="#5af03a"/>
<rect x="947" y="401.5" width="24" height="3" fill="#5af03a"/>
<rect x="919" y="406.5" width="24" height="3" fill="#5af03a"/>
<rect x="947" y="406.5" width="24" height="3" fill="#5af03a"/>
<rect x="919" y="411.5" width="24" height="3" fill="#5af03a"/>
<rect x="947" y="411.5" width="24" height="3" fill="#5af03a"/>
<rect x="919" y="416.5" width="24" height="3" fill="#5af03a"/>
<rect x="947" y="416.5" width="24" height="3" fill="#5af03a"/>
<rect x="919" y="421.5" width="24" height="3" fill="#5af03a"/>
<rect x="947" y="421.5" width="24" height="3" fill="#5af03a"/>
<rect x="919" y="426.5" width="24" height="3" fill="#5af03a"/>
<rect x="947" y="426.5" width="24" height="3" fill="#5af03a"/>
<rect x="919" y="431.5" width="24" height="3" fill="#5af03a"/>
<rect x="947" y="431.5" width="24" height="3" fill="#5af03a"/>
<rect x="919" y="436.5" width="24" height="3" fill="#5af03a"/>
<rect x="947" y="436.5" width="24" height="3" fill="#5af03a"/>
<rect x="919" y="441.5" width="24" height="3" fill="#5af03a"/>
<rect x="947" y="441.5" width="24" height="3" fill="#5af03a"/>
<rect x="919" y="446.5" width="24" height="3" fill="#5af03a"/>
<rect x="947" y="446.5" width="24" height="3" fill="#5af03a"/>
<rect x="919" y="451.5" width="24" height="3" fill="#5af03a"/>
<rect x="947" y="451.5" width="24" height="3" fill="#5af03a"/>
<rect x="919" y="456.5" width="24" height="3" fill="#5af03a"/>
<rect x="947" y="456.5" width="24" height="3" fill="#5af03a"/>
<rect x="919" y="461.5" width="24" height="3" fill="#5af03a"/>
<rect x="947" y="461.5" width="24" height="3" fill="#5af03a"/>
<rect x="919" y="466.5" width="24" height="3" fill="#5af03a"/>
<rect x="947" y="466.5" width="24" height="3" fill="#5af03a"/>
<rect x="919" y="471.5" width="24" height="3" fill="#5af03a"/>
<rect x="947" y="471.5" width="24" height="3" fill="#5af03a"/>
<rect x="919" y="476.5" width="24" height="3" fill="#5af03a"/>
<rect x="947" y="476.5" width="24" height="3" fill="#5af03a"/>
<rect x="919" y="481.5" width="24" height="3" fill="#5af03a"/>
<rect x="947" y="481.5" width="24" height="3" fill="#5af03a"/>
<rect x="919" y="486.5" width="24" height="3" fill="#5af03a"/>
<rect x="947" y="486.5" width="24" height="3" fill="#5af03a"/>
<text x="920.5" y="499" font-size="10.5" fill="#30f030" letter-spacing="0.8">RMS</text>
<text x="920.5" y="513.7" font-size="13" fill="#30f030">-19</text>
<rect x="57" y="519" width="936" height="16" fill="url(#gScr)"/>
<rect x="225" y="523" width="489" height="8" rx="4" fill="#7c7c7c"/>
<rect x="57" y="535" width="936" height="19" fill="#ececec"/>
<rect x="60.5" y="536.5" width="203" height="16.5" rx="2" fill="#d8d8d8" stroke="#9a9a9a" stroke-width="0.8"/>
<text x="269" y="548.3" font-size="12.5" fill="#111">Ready</text>
<text x="773" y="548.3" font-size="12.5" fill="#111" letter-spacing="0.42">16 bit – 44,100 Hz – 3'15"35</text>
</g>
<rect x="56.5" y="34.5" width="937" height="520" rx="5.5" fill="none" stroke="rgba(0,0,0,0.28)" stroke-width="1"/>
</svg></body></html>
